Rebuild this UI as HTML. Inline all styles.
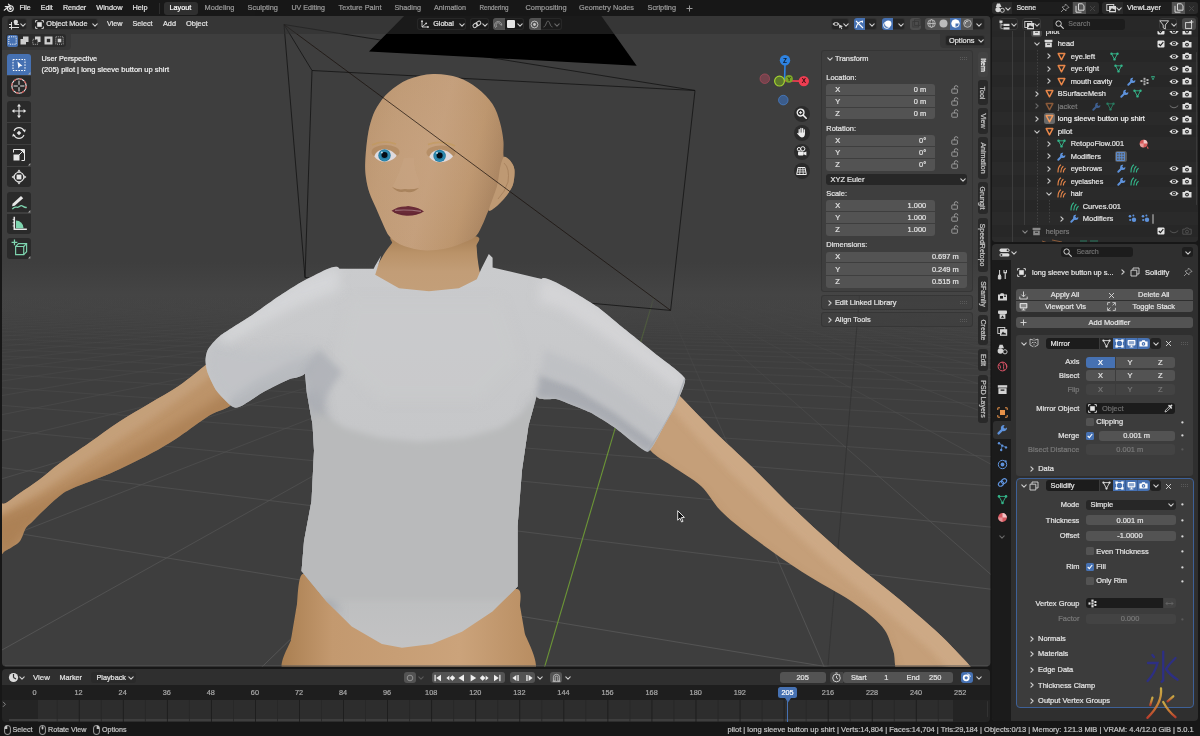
<!DOCTYPE html>
<html><head><meta charset="utf-8"><title>Blender</title>
<style>
html,body{margin:0;padding:0;background:#181818;overflow:hidden}
#root{opacity:0.9999;will-change:transform;position:relative;width:1200px;height:736px;overflow:hidden;background:#181818;font-family:"Liberation Sans",sans-serif;}
.t{position:absolute;white-space:pre;line-height:12px;height:12px;-webkit-text-stroke:0.22px currentColor;}
.r{position:absolute;box-sizing:border-box;}
svg{overflow:visible}
</style></head><body><div id="root">
<svg class="r" style="left:0.00px;top:0.00px;" width="1200" height="736" viewBox="0 0 1200 736"><defs>
<clipPath id="vpclip"><rect x="2" y="16" width="988.4" height="650.4" rx="4" ry="4"/></clipPath>
<linearGradient id="skinHead" x1="0" y1="0" x2="1" y2="0.3">
 <stop offset="0" stop-color="#b8926c"/><stop offset="0.25" stop-color="#c09b76"/><stop offset="0.55" stop-color="#c5a07d"/><stop offset="0.8" stop-color="#bd966e"/><stop offset="1" stop-color="#a88360"/></linearGradient>
<radialGradient id="faceLight" cx="0.38" cy="0.45" r="0.6"><stop offset="0" stop-color="#c9a583" stop-opacity="0.5"/><stop offset="1" stop-color="#c9a583" stop-opacity="0"/></radialGradient>
<linearGradient id="skinNeck" x1="0" y1="0" x2="0" y2="1">
 <stop offset="0" stop-color="#a88056"/><stop offset="0.3" stop-color="#bb946a"/><stop offset="0.6" stop-color="#c39e78"/><stop offset="1" stop-color="#c4a07a"/></linearGradient>
<linearGradient id="skinArmL" x1="0.2" y1="0" x2="0.55" y2="1">
 <stop offset="0" stop-color="#e4ad7b"/><stop offset="0.5" stop-color="#dba26c"/><stop offset="1" stop-color="#c78b54"/></linearGradient>
<linearGradient id="skinArmR" x1="0.6" y1="0" x2="0.25" y2="1">
 <stop offset="0" stop-color="#e9ba8b"/><stop offset="0.5" stop-color="#e2af7d"/><stop offset="1" stop-color="#d29c69"/></linearGradient>
<linearGradient id="skinHip" x1="0" y1="0" x2="1" y2="0">
 <stop offset="0" stop-color="#ab8052"/><stop offset="0.2" stop-color="#c49a70"/><stop offset="0.7" stop-color="#cca47c"/><stop offset="1" stop-color="#b98e62"/></linearGradient>
<linearGradient id="shirtBody" x1="0" y1="0" x2="1" y2="0">
 <stop offset="0" stop-color="#cfd2d8"/><stop offset="0.1" stop-color="#dcdee3"/><stop offset="0.45" stop-color="#e6e7ea"/><stop offset="0.85" stop-color="#e3e4e8"/><stop offset="1" stop-color="#d8dade"/></linearGradient>
<linearGradient id="shirtSlL" x1="0.3" y1="0" x2="0.6" y2="1">
 <stop offset="0" stop-color="#ebecef"/><stop offset="0.55" stop-color="#dfe1e5"/><stop offset="1" stop-color="#cdd0d6"/></linearGradient>
<linearGradient id="shirtSlR" x1="0.7" y1="0" x2="0.35" y2="1">
 <stop offset="0" stop-color="#f1f2f4"/><stop offset="0.45" stop-color="#e8e9ec"/><stop offset="0.8" stop-color="#d6d9df"/><stop offset="1" stop-color="#c6cad2"/></linearGradient>
<linearGradient id="gfade" gradientUnits="userSpaceOnUse" x1="0" y1="292" x2="0" y2="450"><stop offset="0" stop-color="#6c9636" stop-opacity="0"/><stop offset="0.15" stop-color="#6c9636" stop-opacity="0.25"/><stop offset="0.5" stop-color="#6c9636" stop-opacity="0.45"/><stop offset="1" stop-color="#6c9636" stop-opacity="1"/></linearGradient>
<linearGradient id="gridfade" gradientUnits="userSpaceOnUse" x1="0" y1="296" x2="0" y2="670"><stop offset="0" stop-color="#4c4c4c" stop-opacity="0"/><stop offset="0.15" stop-color="#4c4c4c" stop-opacity="0.45"/><stop offset="0.5" stop-color="#525252" stop-opacity="0.9"/><stop offset="1" stop-color="#5a5a5a" stop-opacity="1"/></linearGradient>
<filter id="b3" x="-20%" y="-20%" width="140%" height="140%"><feGaussianBlur stdDeviation="3"/></filter><filter id="b6" x="-20%" y="-20%" width="140%" height="140%"><feGaussianBlur stdDeviation="6"/></filter>
</defs><g clip-path="url(#vpclip)"><rect x="0" y="0" width="1000" height="700" fill="#3f3f3f"/><g stroke="url(#gridfade)" stroke-width="0.85" fill="none"><line x1="0" y1="530.4" x2="995" y2="694.5"/><line x1="0" y1="467.4" x2="995" y2="589.7"/><line x1="0" y1="430.0" x2="995" y2="527.5"/><line x1="0" y1="405.2" x2="995" y2="486.2"/><line x1="0" y1="387.5" x2="995" y2="456.9"/><line x1="0" y1="374.3" x2="995" y2="434.9"/><line x1="0" y1="364.1" x2="995" y2="417.9"/><line x1="0" y1="355.9" x2="995" y2="404.3"/><line x1="0" y1="349.3" x2="995" y2="393.2"/><line x1="0" y1="343.7" x2="995" y2="384.0"/><line x1="0" y1="339.0" x2="995" y2="376.2"/><line x1="0" y1="335.0" x2="995" y2="369.5"/><line x1="0" y1="331.5" x2="995" y2="363.7"/><line x1="0" y1="328.5" x2="995" y2="358.6"/><line x1="0" y1="325.8" x2="995" y2="354.1"/><line x1="0" y1="323.4" x2="995" y2="350.2"/><line x1="0" y1="321.3" x2="995" y2="346.6"/><line x1="0" y1="319.3" x2="995" y2="343.4"/><line x1="0" y1="317.6" x2="995" y2="340.5"/><line x1="0" y1="316.0" x2="995" y2="337.9"/><line x1="0" y1="314.6" x2="995" y2="335.5"/><line x1="0" y1="313.3" x2="995" y2="333.3"/><line x1="0" y1="312.0" x2="995" y2="331.3"/><line x1="0" y1="310.9" x2="995" y2="329.4"/><line x1="0" y1="309.9" x2="995" y2="327.7"/><line x1="0" y1="308.9" x2="995" y2="326.1"/><line x1="0" y1="308.0" x2="995" y2="324.6"/><line x1="0" y1="307.2" x2="995" y2="323.2"/><line x1="0" y1="306.4" x2="995" y2="321.9"/><line x1="0" y1="305.7" x2="995" y2="320.7"/><line x1="0" y1="305.0" x2="995" y2="319.6"/><line x1="0" y1="304.3" x2="995" y2="318.5"/><line x1="0" y1="303.7" x2="995" y2="317.5"/><line x1="0" y1="303.2" x2="995" y2="316.5"/><line x1="0" y1="302.6" x2="995" y2="315.6"/><line x1="0" y1="302.1" x2="995" y2="314.8"/><line x1="0" y1="301.6" x2="995" y2="313.9"/><line x1="0" y1="301.1" x2="995" y2="313.2"/><line x1="0" y1="300.7" x2="995" y2="312.4"/><line x1="0" y1="300.3" x2="995" y2="311.7"/><line x1="0" y1="299.9" x2="995" y2="311.1"/><line x1="0" y1="299.5" x2="995" y2="310.4"/><line x1="0" y1="299.1" x2="995" y2="309.8"/><line x1="0" y1="298.8" x2="995" y2="309.2"/><line x1="0" y1="298.4" x2="995" y2="308.7"/><line x1="0" y1="298.1" x2="995" y2="308.1"/><line x1="0" y1="297.8" x2="995" y2="307.6"/><line x1="0" y1="297.5" x2="995" y2="307.1"/><line x1="0" y1="297.2" x2="995" y2="306.6"/><line x1="0" y1="296.9" x2="995" y2="306.2"/><line x1="0" y1="296.7" x2="995" y2="305.8"/><line x1="0" y1="296.4" x2="995" y2="305.3"/><line x1="0" y1="296.2" x2="995" y2="304.9"/><line x1="0" y1="295.9" x2="995" y2="304.5"/><line x1="0" y1="295.7" x2="995" y2="304.2"/><line x1="0" y1="295.5" x2="995" y2="303.8"/><line x1="0" y1="295.3" x2="995" y2="303.4"/><line x1="0" y1="295.1" x2="995" y2="303.1"/><line x1="0" y1="294.9" x2="995" y2="302.8"/><line x1="0" y1="294.7" x2="995" y2="302.4"/><line x1="0" y1="294.5" x2="995" y2="302.1"/><line x1="0" y1="294.3" x2="995" y2="301.8"/><line x1="623.4" y1="283.5" x2="-9734.1" y2="446.4"/><line x1="623.5" y1="283.6" x2="-9688.1" y2="452.7"/><line x1="623.7" y1="283.6" x2="-9640.4" y2="459.3"/><line x1="623.8" y1="283.6" x2="-9590.9" y2="466.1"/><line x1="624.0" y1="283.6" x2="-9539.6" y2="473.2"/><line x1="624.2" y1="283.7" x2="-9486.3" y2="480.6"/><line x1="624.4" y1="283.7" x2="-9430.8" y2="488.2"/><line x1="624.6" y1="283.7" x2="-9373.1" y2="496.2"/><line x1="624.8" y1="283.7" x2="-9313.1" y2="504.5"/><line x1="625.0" y1="283.8" x2="-9250.5" y2="513.1"/><line x1="625.2" y1="283.8" x2="-9185.2" y2="522.1"/><line x1="625.4" y1="283.8" x2="-9117.1" y2="531.5"/><line x1="625.7" y1="283.9" x2="-9045.9" y2="541.4"/><line x1="625.9" y1="283.9" x2="-8971.4" y2="551.6"/><line x1="626.2" y1="283.9" x2="-8893.5" y2="562.4"/><line x1="626.4" y1="284.0" x2="-8811.7" y2="573.7"/><line x1="626.7" y1="284.0" x2="-8726.0" y2="585.5"/><line x1="627.0" y1="284.0" x2="-8635.9" y2="597.9"/><line x1="627.3" y1="284.1" x2="-8541.2" y2="611.0"/><line x1="627.7" y1="284.1" x2="-8441.4" y2="624.8"/><line x1="628.0" y1="284.2" x2="-8336.1" y2="639.3"/><line x1="628.4" y1="284.2" x2="-8225.0" y2="654.7"/><line x1="628.8" y1="284.3" x2="-8107.4" y2="670.9"/><line x1="629.2" y1="284.4" x2="-7982.7" y2="688.1"/><line x1="629.6" y1="284.4" x2="-7850.5" y2="706.3"/><line x1="630.1" y1="284.5" x2="-7709.8" y2="725.7"/><line x1="630.6" y1="284.5" x2="-7560.0" y2="746.4"/><line x1="631.1" y1="284.6" x2="-7400.0" y2="768.5"/><line x1="631.7" y1="284.7" x2="-7228.8" y2="792.1"/><line x1="632.3" y1="284.8" x2="-7045.2" y2="817.5"/><line x1="633.0" y1="284.9" x2="-6847.8" y2="844.7"/><line x1="633.7" y1="285.0" x2="-6635.0" y2="874.1"/><line x1="634.5" y1="285.1" x2="-6404.8" y2="905.8"/><line x1="635.3" y1="285.2" x2="-6155.0" y2="940.3"/><line x1="636.2" y1="285.3" x2="-5883.2" y2="977.8"/><line x1="637.2" y1="285.5" x2="-5586.1" y2="1018.8"/><line x1="638.3" y1="285.6" x2="-5260.1" y2="1063.8"/><line x1="639.5" y1="285.8" x2="-4900.8" y2="1113.4"/><line x1="640.8" y1="286.0" x2="-4502.8" y2="1168.3"/><line x1="642.3" y1="286.2" x2="-4059.5" y2="1229.5"/><line x1="643.9" y1="286.4" x2="-3562.7" y2="1298.0"/><line x1="645.8" y1="286.6" x2="-3002.1" y2="1375.4"/><line x1="647.9" y1="286.9" x2="-2364.4" y2="1463.4"/><line x1="650.4" y1="287.3" x2="-1632.8" y2="1564.4"/><line x1="653.2" y1="287.7" x2="-784.7" y2="1681.4"/><line x1="660.5" y1="288.7" x2="1393.0" y2="1981.9"/><line x1="665.2" y1="289.3" x2="2823.4" y2="2179.3"/><line x1="671.1" y1="290.1" x2="4587.6" y2="2422.8"/><line x1="678.5" y1="291.2" x2="6818.3" y2="2730.6"/><line x1="688.2" y1="292.5" x2="9728.3" y2="3132.2"/><line x1="701.4" y1="294.3" x2="13684.0" y2="3678.1"/><line x1="720.4" y1="296.9" x2="19372.3" y2="4463.1"/><line x1="750.0" y1="301.0" x2="28250.5" y2="5688.3"/><line x1="802.6" y1="308.3" x2="44048.0" y2="7868.3"/><line x1="922.5" y1="324.8" x2="80017.7" y2="12832.1"/><line x1="1465.9" y1="399.8" x2="243029.1" y2="35327.7"/></g><linearGradient id="haze" gradientUnits="userSpaceOnUse" x1="0" y1="262" x2="0" y2="345"><stop offset="0" stop-color="#4c4c4c" stop-opacity="0"/><stop offset="0.4" stop-color="#4c4c4c" stop-opacity="0.5"/><stop offset="1" stop-color="#4c4c4c" stop-opacity="0"/></linearGradient><rect x="0" y="262" width="1000" height="85" fill="url(#haze)"/><line x1="859.5" y1="296" x2="827.6" y2="670" stroke="#343434" stroke-width="0.8"/><line x1="654.3" y1="296" x2="543.7" y2="670" stroke="url(#gfade)" stroke-width="1.1"/><g stroke="#141414" stroke-width="0.8" fill="none"><line x1="284" y1="24.5" x2="312" y2="70.5"/><line x1="284" y1="24.5" x2="695" y2="90.5"/><line x1="284" y1="24.5" x2="305" y2="277.5"/><polygon points="312.0,70.5 695.0,90.5 670.6,310.4 305.0,277.5"/></g><polygon points="369.0,51.4 636.7,65.7 590.0,0.0 420.0,0.0" fill="#000"/><path d="M303.0 574.0C308.1 573.8 389.3 599.2 400.0 600.0C410.7 600.8 511.0 588.7 517.0 589.0C523.0 589.3 519.6 603.8 520.0 606.0C520.4 608.2 524.4 630.7 525.0 634.0C525.6 637.3 544.0 670.1 532.0 672.0C520.0 673.9 298.1 673.6 286.0 672.0C273.9 670.4 290.4 643.4 291.0 640.0C291.6 636.6 296.4 607.3 297.0 604.0C297.6 600.7 297.9 574.2 303.0 574.0Z" fill="url(#skinHip)"/><clipPath id="armLclip"><path d="M214.0 358.0C208.4 355.4 212.1 360.0 206.3 364.6C200.5 369.2 188.9 379.1 179.4 385.6C169.9 392.1 159.5 397.5 149.5 403.5C139.5 409.5 129.6 414.9 119.6 421.4C109.6 427.9 99.7 435.4 89.7 442.4C79.7 449.4 68.3 457.0 59.8 463.3C51.3 469.6 45.5 475.1 38.9 480.0C32.3 484.9 25.5 489.2 20.0 493.0C14.5 496.8 10.0 500.5 6.0 503.0C2.0 505.5 -2.3 499.2 -4.0 508.0C-5.7 516.8 -5.5 548.8 -4.0 556.0C-2.5 563.2 2.3 552.5 5.0 551.0C7.7 549.5 9.5 548.7 12.0 547.0C14.5 545.3 17.7 544.1 20.0 541.0C22.3 537.9 23.7 531.5 25.7 528.3C27.7 525.1 28.9 525.0 32.0 522.0C35.0 519.0 39.2 514.5 44.0 510.0C48.8 505.6 55.6 499.0 60.5 495.3C65.4 491.6 65.0 491.6 73.3 488.0C81.5 484.4 97.3 479.1 110.0 473.5C122.7 467.9 137.9 460.5 149.5 454.3C161.1 448.1 169.4 442.9 179.4 436.4C189.4 429.9 200.5 420.9 209.3 415.5C218.1 410.1 226.9 409.9 232.0 404.0C237.1 398.1 243.0 387.7 240.0 380.0C237.0 372.3 219.6 360.6 214.0 358.0Z"/></clipPath><g clip-path="url(#armLclip)"><rect x="-10" y="340" width="270" height="230" fill="#be956b"/><polygon points="250.0,395.0 232.0,410.0 209.3,422.0 179.4,443.0 149.5,461.0 119.6,476.0 104.6,487.0 60.0,506.0 30.0,530.0 0.0,566.0 -10.0,520.0 40.0,500.0 100.0,468.0 150.0,440.0 200.0,410.0 240.0,385.0" fill="#a3764a" opacity="0.6" filter="url(#b6)"/><polygon points="214.0,352.0 206.3,358.0 179.4,379.0 149.5,397.0 119.6,415.0 89.7,436.0 59.8,457.0 20.0,487.0 -10.0,505.0 -10.0,520.0 40.0,492.0 100.0,452.0 150.0,420.0 200.0,385.0 225.0,365.0" fill="#c6a27d" opacity="0.9" filter="url(#b3)"/></g><clipPath id="armRclip"><path d="M668.0 384.0C674.7 378.4 672.2 388.3 680.0 396.3C687.8 404.3 703.2 420.4 715.0 432.0C726.8 443.6 736.6 452.0 751.0 466.0C765.4 480.0 784.7 500.2 801.5 516.0C818.3 531.8 835.0 546.8 851.8 561.0C868.5 575.2 885.3 587.2 902.0 601.5C918.7 615.8 939.8 633.3 952.0 646.7C964.2 660.1 982.8 676.1 975.0 682.0C967.2 687.9 918.7 687.3 905.0 682.0C891.3 676.7 896.8 659.2 893.0 650.0C889.2 640.8 888.9 634.7 882.0 626.6C875.1 618.5 865.2 610.7 851.8 601.5C838.4 592.3 818.3 582.3 801.5 571.4C784.7 560.5 764.4 546.1 751.0 536.0C737.6 525.9 729.3 519.3 721.0 511.0C712.7 502.7 709.2 493.5 701.0 486.0C692.8 478.5 680.4 471.9 672.0 466.0C663.6 460.1 656.1 456.8 650.8 450.8C645.5 444.8 637.1 441.1 640.0 430.0C642.9 418.9 661.3 389.6 668.0 384.0Z"/></clipPath><g clip-path="url(#armRclip)"><rect x="630" y="370" width="370" height="320" fill="#c6a07a"/><polygon points="640.0,440.0 650.8,458.0 672.0,474.0 701.0,494.0 721.0,519.0 751.0,544.0 801.5,579.0 851.8,609.0 882.0,634.0 900.0,690.0 860.0,690.0 840.0,620.0 790.0,585.0 740.0,550.0 700.0,515.0 660.0,480.0 635.0,455.0" fill="#ad855c" opacity="0.9" filter="url(#b6)"/><polygon points="668.0,376.0 680.0,388.0 715.0,424.0 751.0,458.0 801.5,508.0 851.8,553.0 902.0,593.0 952.0,638.0 985.0,682.0 960.0,682.0 930.0,650.0 880.0,606.0 830.0,565.0 780.0,520.0 730.0,472.0 690.0,430.0 662.0,398.0" fill="#cfab88" opacity="0.9" filter="url(#b3)"/></g><path d="M396.0 236.0C385.1 236.9 393.3 241.0 392.0 243.0C390.7 245.0 387.6 248.6 386.0 251.0C384.4 253.4 381.5 258.2 380.0 261.0C378.5 263.8 375.7 268.9 375.0 272.0C374.3 275.1 371.8 281.2 375.0 284.0C378.2 286.8 391.8 291.4 399.0 293.0C406.2 294.6 421.0 296.0 429.0 296.0C437.0 296.0 452.5 294.6 459.0 293.0C465.5 291.4 474.5 285.9 478.0 284.0C481.5 282.1 484.7 280.5 485.0 279.0C485.3 277.5 481.0 275.3 480.0 272.5C479.0 269.7 478.0 261.5 477.5 258.0C477.0 254.5 477.0 248.9 476.5 246.0C476.0 243.1 484.7 237.3 474.0 236.0C463.3 234.7 406.9 235.1 396.0 236.0Z" fill="url(#skinNeck)"/><clipPath id="shirtclip"><polygon points="381.2,255.4 375.0,266.0 373.7,268.8 339.4,268.8 309.5,277.8 279.6,295.7 260.0,372.0 305.0,373.4 306.5,391.3 312.5,424.2 314.0,450.7 311.5,501.0 304.0,541.0 301.5,571.0 326.6,601.5 351.7,626.6 381.9,644.0 402.0,647.7 432.0,644.0 462.0,631.7 492.5,611.5 517.6,586.4 517.6,526.0 522.0,470.0 528.5,425.6 536.6,396.3 600.0,400.0 623.0,327.8 597.0,306.6 567.6,288.7 541.5,279.0 492.6,267.5 492.6,257.7 488.8,254.0 481.3,268.8 476.8,279.3 458.9,288.3 429.0,291.2 399.0,288.3 375.2,274.8"/><path d="M339.4 268.8C337.0 261.5 316.5 274.7 309.5 277.8C302.5 280.9 286.6 291.2 279.6 295.7C272.6 300.2 256.8 311.9 249.8 316.6C242.8 321.3 224.8 332.2 219.9 336.0C215.0 339.8 209.6 346.6 207.9 349.5C206.2 352.4 205.5 358.2 205.5 361.0C205.5 363.8 206.6 369.9 207.9 373.4C209.2 376.9 214.1 387.5 216.9 391.3C219.7 395.1 229.0 404.6 231.8 406.3C234.6 408.1 237.0 408.1 240.8 406.3C244.6 404.6 259.1 394.4 264.7 391.3C270.3 388.2 283.9 381.5 288.6 379.4C293.3 377.3 300.2 378.0 305.0 373.4C309.8 368.8 326.0 352.2 330.0 340.0C334.0 327.8 341.8 276.1 339.4 268.8Z"/><path d="M541.5 279.0C543.8 274.7 563.0 286.4 567.6 288.7C572.2 291.0 592.4 303.3 597.0 306.6C601.6 309.9 618.1 323.9 623.0 327.8C627.9 331.7 650.4 349.7 655.6 353.9C660.8 358.1 683.4 374.1 685.0 378.4C686.6 382.7 677.1 401.8 675.2 406.0C673.3 410.2 664.5 425.1 662.2 428.9C659.9 432.7 651.3 451.7 647.5 451.7C643.7 451.7 621.3 432.2 616.5 428.9C611.7 425.6 595.3 415.1 590.4 412.6C585.5 410.2 562.3 400.9 557.8 399.5C553.3 398.1 538.1 401.3 536.6 396.3C535.1 391.3 539.6 349.8 540.0 340.0C540.4 330.2 539.2 283.3 541.5 279.0Z"/></clipPath><g clip-path="url(#shirtclip)"><linearGradient id="shirtV" gradientUnits="userSpaceOnUse" x1="0" y1="260" x2="0" y2="650"><stop offset="0" stop-color="#cbccce"/><stop offset="0.45" stop-color="#c7c8ca"/><stop offset="0.6" stop-color="#bebfc0"/><stop offset="0.85" stop-color="#bebfc0"/><stop offset="1" stop-color="#c4c4c5"/></linearGradient><rect x="190" y="240" width="520" height="420" fill="url(#shirtV)"/><polygon points="300.0,392.0 322.0,392.0 332.0,450.0 330.0,520.0 326.0,580.0 340.0,615.0 320.0,615.0 296.0,575.0 300.0,500.0 306.0,450.0" fill="#a6a9af" opacity="0.9" filter="url(#b6)"/><polygon points="530.0,400.0 540.0,400.0 530.0,470.0 524.0,590.0 512.0,600.0 512.0,520.0 516.0,450.0" fill="#b0b2b6" opacity="0.8" filter="url(#b6)"/><polygon points="296.0,392.0 318.0,412.0 345.0,428.0 380.0,438.0 420.0,442.0 465.0,438.0 500.0,428.0 522.0,414.0 545.0,392.0 545.0,600.0 420.0,600.0 290.0,600.0" fill="#babbbc" opacity="1.0" filter="url(#b3)"/><polygon points="350.0,300.0 500.0,300.0 520.0,360.0 480.0,400.0 380.0,400.0 335.0,360.0" fill="#cbcccd" opacity="0.6" filter="url(#b6)"/><polygon points="228.0,408.0 244.0,408.0 266.0,393.0 290.0,381.0 308.0,375.0 320.0,352.0 290.0,362.0 255.0,380.0 232.0,396.0" fill="#adb0b6" opacity="0.95" filter="url(#b3)"/><polygon points="204.0,350.0 215.0,340.0 250.0,350.0 300.0,345.0 325.0,350.0 310.0,375.0 260.0,392.0 235.0,408.0 215.0,392.0 205.0,372.0" fill="#c0c2c6" opacity="0.7" filter="url(#b6)"/><polygon points="339.0,266.0 309.0,275.0 279.0,293.0 249.0,314.0 219.0,334.0 225.0,345.0 260.0,325.0 300.0,305.0 340.0,290.0" fill="#d7d8da" opacity="0.9" filter="url(#b6)"/><polygon points="303.0,372.0 320.0,350.0 342.0,372.0 326.0,396.0 312.0,422.0" fill="#aeb1b7" opacity="0.8" filter="url(#b3)"/><polygon points="536.0,397.0 540.0,374.0 575.0,386.0 615.0,411.0 658.0,443.0 647.5,453.0 616.5,430.0 590.4,414.0 557.8,401.0" fill="#a9acb2" opacity="0.95" filter="url(#b3)"/><polygon points="540.0,374.0 545.0,350.0 590.0,368.0 630.0,395.0 668.0,425.0 658.0,443.0 615.0,411.0 575.0,386.0" fill="#bfc1c5" opacity="0.85" filter="url(#b3)"/><polygon points="541.5,277.0 567.6,286.7 597.0,304.6 623.0,325.8 655.6,351.9 687.0,377.0 680.0,392.0 640.0,362.0 600.0,333.0 560.0,308.0 538.0,302.0" fill="#d6d6d8" opacity="0.95" filter="url(#b6)"/><path d="M685 378.4 L675.2 406 L662.2 428.9 L647.5 451.7" stroke="#a9acb3" stroke-width="1.6" fill="none" opacity="0.8"/></g><path d="M433.0 74.0C424.7 74.3 415.3 76.5 408.0 79.5C400.7 82.5 394.2 87.4 389.0 92.0C383.8 96.6 380.1 101.9 377.0 107.0C373.9 112.1 372.3 116.8 370.6 122.5C368.9 128.2 367.9 134.2 367.0 141.0C366.1 147.8 365.4 156.8 365.2 163.0C365.0 169.2 365.3 173.0 366.0 178.0C366.7 183.0 367.8 188.0 369.5 193.0C371.2 198.0 373.8 203.0 376.0 208.0C378.2 213.0 380.2 218.2 382.5 223.0C384.8 227.8 386.4 233.2 390.0 237.0C393.6 240.8 398.0 243.8 404.0 246.0C410.0 248.2 418.7 250.2 426.0 250.5C433.3 250.8 441.5 249.4 448.0 248.0C454.5 246.6 460.3 244.0 465.0 242.0C469.7 240.0 472.9 239.2 476.0 236.0C479.1 232.8 481.3 226.8 483.5 222.5C485.7 218.2 487.0 212.6 489.0 210.0C491.0 207.4 492.9 209.1 495.6 207.0C498.3 204.9 502.1 201.2 505.0 197.5C507.9 193.8 511.2 189.7 512.8 185.0C514.4 180.3 514.9 173.5 514.4 169.4C513.9 165.3 511.8 162.6 510.0 160.5C508.2 158.4 504.9 160.2 503.8 157.0C502.7 153.8 504.0 146.8 503.4 141.0C502.8 135.2 501.8 128.7 500.0 122.5C498.2 116.3 496.3 109.8 492.5 104.0C488.7 98.2 482.8 92.4 477.0 88.0C471.2 83.6 465.3 79.8 458.0 77.5C450.7 75.2 441.3 73.7 433.0 74.0Z" fill="url(#skinHead)"/><path d="M433.0 74.0C424.7 74.3 415.3 76.5 408.0 79.5C400.7 82.5 394.2 87.4 389.0 92.0C383.8 96.6 380.1 101.9 377.0 107.0C373.9 112.1 372.3 116.8 370.6 122.5C368.9 128.2 367.9 134.2 367.0 141.0C366.1 147.8 365.4 156.8 365.2 163.0C365.0 169.2 365.3 173.0 366.0 178.0C366.7 183.0 367.8 188.0 369.5 193.0C371.2 198.0 373.8 203.0 376.0 208.0C378.2 213.0 380.2 218.2 382.5 223.0C384.8 227.8 386.4 233.2 390.0 237.0C393.6 240.8 398.0 243.8 404.0 246.0C410.0 248.2 418.7 250.2 426.0 250.5C433.3 250.8 441.5 249.4 448.0 248.0C454.5 246.6 460.3 244.0 465.0 242.0C469.7 240.0 472.9 239.2 476.0 236.0C479.1 232.8 481.3 226.8 483.5 222.5C485.7 218.2 487.0 212.6 489.0 210.0C491.0 207.4 492.9 209.1 495.6 207.0C498.3 204.9 502.1 201.2 505.0 197.5C507.9 193.8 511.2 189.7 512.8 185.0C514.4 180.3 514.9 173.5 514.4 169.4C513.9 165.3 511.8 162.6 510.0 160.5C508.2 158.4 504.9 160.2 503.8 157.0C502.7 153.8 504.0 146.8 503.4 141.0C502.8 135.2 501.8 128.7 500.0 122.5C498.2 116.3 496.3 109.8 492.5 104.0C488.7 98.2 482.8 92.4 477.0 88.0C471.2 83.6 465.3 79.8 458.0 77.5C450.7 75.2 441.3 73.7 433.0 74.0Z" fill="url(#faceLight)"/><path d="M503.8 157.0C505.1 156.0 508.6 158.8 510.0 160.5C511.4 162.2 514.0 166.1 514.4 169.4C514.8 172.7 514.1 181.3 512.8 185.0C511.5 188.7 507.3 194.6 505.0 197.5C502.7 200.4 497.7 205.3 495.6 207.0C493.5 208.7 488.8 212.8 489.0 210.0C489.2 207.2 495.5 191.6 497.0 186.0C498.5 180.4 499.1 171.9 500.0 168.0C500.9 164.1 502.5 158.0 503.8 157.0Z" fill="#bf9a74"/><path d="M504 163 Q510 168 508 182 Q505 192 498 199" stroke="#a27c58" stroke-width="1" fill="none" opacity="0.7"/><ellipse cx="385.5" cy="152" rx="14" ry="7" fill="#a37a4e" opacity="0.45"/><ellipse cx="441" cy="152.5" rx="14.5" ry="7" fill="#a37a4e" opacity="0.45"/><path d="M374.3 156.4 C377.3 147.4 389.7 146.4 396.7 155.8 C391.7 163.0 379.3 164.0 374.3 156.4Z" fill="#e0dbde"/><circle cx="384.5" cy="155.4" r="6.2" fill="#267da3"/><circle cx="384.5" cy="155.4" r="4.6" fill="none" stroke="#3a98bd" stroke-width="1.3" opacity="0.7"/><circle cx="384.5" cy="155.1" r="3.0" fill="#050c16"/><circle cx="381.9" cy="152.4" r="1" fill="#e8f4fa" opacity="0.8"/><path d="M429.3 156.9 C432.3 147.9 446.1 146.9 453.1 156.3 C448.1 163.5 434.3 164.5 429.3 156.9Z" fill="#e0dbde"/><circle cx="439.6" cy="155.9" r="6.2" fill="#267da3"/><circle cx="439.6" cy="155.9" r="4.6" fill="none" stroke="#3a98bd" stroke-width="1.3" opacity="0.7"/><circle cx="439.6" cy="155.6" r="3.0" fill="#050c16"/><circle cx="437.0" cy="152.9" r="1" fill="#e8f4fa" opacity="0.8"/><path d="M372 145 Q383 139.5 396 144" stroke="#c39a52" stroke-width="1.6" fill="none" opacity="0.5"/><path d="M428 144.5 Q441 139.5 455 146" stroke="#c39a52" stroke-width="1.6" fill="none" opacity="0.5"/><path d="M404 158 Q400 172 393 186 Q397 192 404 191 Q410 193 416 189 Q421 186 419 180 Q414 170 414 158Z" fill="#cba886" opacity="0.4"/><path d="M392 187 Q398 193.5 405 191.5 Q412 194 419 188 Q412 190 405 189 Q398 190.5 392 187Z" fill="#9e7750" opacity="0.7"/><path d="M391.5 210.8 Q398 206.2 405.5 206.4 Q408 205.6 411 206.4 Q419 207.4 424 211.6 Q416 216.2 406.5 215.8 Q397.5 215.4 391.5 210.8Z" fill="#6b2c38"/><path d="M395 210.4 Q407 209.2 421 211.4" stroke="#b48d92" stroke-width="1.1" fill="none" opacity="0.7"/><path d="M394 212.2 Q407 216 421.5 212.6" stroke="#5a222e" stroke-width="0.8" fill="none" opacity="0.7"/><line x1="284" y1="24.5" x2="670.6" y2="310.4" stroke="#1a120c" stroke-width="0.8" opacity="0.9"/><rect x="5" y="665.5" width="983" height="0.9" fill="#585858"/></g></svg>
<svg class="r" style="left:3.00px;top:2.00px;" width="12" height="12" viewBox="0 0 12 12"><g fill="none" stroke="#e6e6e6" stroke-width="1.1" stroke-linecap="round"><circle cx="7.4" cy="6.6" r="2.9"/><circle cx="7.4" cy="6.6" r="0.9" fill="#e6e6e6"/><path d="M1.2 8.2 L5.2 5 M2.2 4.6 L6.6 4.6 M5.4 2.2 L7.6 4"/></g></svg>
<div class="t" style="left:19.50px;top:2.39px;font-size:6.98px;color:#e3e3e3;">File</div>
<div class="t" style="left:40.75px;top:2.39px;font-size:6.96px;color:#e3e3e3;">Edit</div>
<div class="t" style="left:63.00px;top:2.39px;font-size:7.09px;color:#e3e3e3;">Render</div>
<div class="t" style="left:96.25px;top:2.38px;font-size:7.38px;color:#e3e3e3;">Window</div>
<div class="t" style="left:132.50px;top:2.38px;font-size:7.29px;color:#e3e3e3;">Help</div>
<div class="r" style="left:158.50px;top:3.00px;width:0.80px;height:11.00px;background:#2e2e2e;border-radius:0px;"></div>
<div class="r" style="left:163.75px;top:2.00px;width:33.75px;height:12.60px;background:#303030;border-radius:3px;"></div>
<div class="t" style="left:169.50px;top:2.38px;font-size:7.24px;color:#ffffff;">Layout</div>
<div class="t" style="left:204.50px;top:2.38px;font-size:7.39px;color:#9a9a9a;">Modeling</div>
<div class="t" style="left:247.50px;top:2.38px;font-size:7.41px;color:#9a9a9a;">Sculpting</div>
<div class="t" style="left:291.50px;top:2.39px;font-size:7.09px;color:#9a9a9a;">UV Editing</div>
<div class="t" style="left:338.50px;top:2.38px;font-size:7.37px;color:#9a9a9a;">Texture Paint</div>
<div class="t" style="left:394.50px;top:2.38px;font-size:7.22px;color:#9a9a9a;">Shading</div>
<div class="t" style="left:434.00px;top:2.38px;font-size:7.20px;color:#9a9a9a;">Animation</div>
<div class="t" style="left:479.50px;top:2.41px;font-size:6.29px;color:#9a9a9a;">Rendering</div>
<div class="t" style="left:525.50px;top:2.38px;font-size:7.38px;color:#9a9a9a;">Compositing</div>
<div class="t" style="left:579.00px;top:2.38px;font-size:7.28px;color:#9a9a9a;">Geometry Nodes</div>
<div class="t" style="left:647.50px;top:2.38px;font-size:7.33px;color:#9a9a9a;">Scripting</div>
<svg class="r" style="left:686.00px;top:4.50px;" width="7" height="7" viewBox="0 0 7 7"><path d="M3.5 0.5V6.5M0.5 3.5H6.5" stroke="#9a9a9a" stroke-width="1"/></svg>
<div class="r" style="left:992.00px;top:2.00px;width:107.00px;height:12.00px;background:#2b2b2b;border-radius:3px;"></div>
<svg class="r" style="left:995.00px;top:3.00px;" width="12" height="10" viewBox="0 0 12 10"><g fill="#d8d8d8"><path d="M2 0.5 L5 0.5 L6.5 4 L0.8 4 Z"/><circle cx="3" cy="6.6" r="2.6"/><circle cx="7.3" cy="7.3" r="2" fill="none" stroke="#d8d8d8" stroke-width="0.9"/></g></svg>
<svg class="r" style="left:1003.50px;top:4.50px;" width="8" height="8" viewBox="0 0 8 8"><path d="M1.7999999999999998 2.9 L4 5.1 L6.2 2.9" stroke="#d0d0d0" stroke-width="1.1" fill="none" stroke-linecap="round" stroke-linejoin="round"/></svg>
<div class="r" style="left:1012.00px;top:2.00px;width:60.00px;height:12.00px;background:#1f1f1f;border-radius:0px;"></div>
<div class="t" style="left:1016.50px;top:2.39px;font-size:6.88px;color:#e3e3e3;">Scene</div>
<svg class="r" style="left:1060.00px;top:3.00px;" width="10" height="10" viewBox="0 0 10 10"><path d="M5.5 1 L9 4.5 L7.5 5 L6 6.5 L6 8 L2 4 L3.5 4 L5 2.5 Z M3.8 6.2 L1 9" fill="none" stroke="#9a9a9a" stroke-width="0.9" stroke-linejoin="round"/></svg>
<div class="r" style="left:1073.00px;top:2.00px;width:13.00px;height:12.00px;background:#545454;border-radius:0px;"></div>
<svg class="r" style="left:1074.50px;top:3.00px;" width="10" height="10" viewBox="0 0 10 10"><path d="M3.5 0.8 H7.2 L9 2.6 V7.2 H3.5 Z" fill="none" stroke="#e6e6e6" stroke-width="0.9"/><path d="M1 2.8 V9.2 H6.5" fill="none" stroke="#e6e6e6" stroke-width="0.9"/></svg>
<svg class="r" style="left:1089.00px;top:4.50px;" width="7" height="7" viewBox="0 0 7 7"><path d="M1 1L6 6M6 1L1 6" stroke="#4a4a4a" stroke-width="0.9"/></svg>
<div class="r" style="left:1102.00px;top:2.00px;width:96.00px;height:12.00px;background:#2b2b2b;border-radius:3px;"></div>
<svg class="r" style="left:1106.00px;top:3.00px;" width="11" height="10" viewBox="0 0 11 10"><rect x="0.8" y="1.5" width="7" height="6" fill="none" stroke="#d8d8d8" stroke-width="0.9"/><rect x="3" y="3" width="7" height="6.3" fill="#d8d8d8"/><path d="M4 8 L6 5 L7.2 6.6 L8 5.8 L9.3 8Z" fill="#2b2b2b"/></svg>
<svg class="r" style="left:1114.50px;top:4.50px;" width="8" height="8" viewBox="0 0 8 8"><path d="M1.7999999999999998 2.9 L4 5.1 L6.2 2.9" stroke="#d0d0d0" stroke-width="1.1" fill="none" stroke-linecap="round" stroke-linejoin="round"/></svg>
<div class="r" style="left:1123.00px;top:2.00px;width:48.00px;height:12.00px;background:#1f1f1f;border-radius:0px;"></div>
<div class="t" style="left:1127.00px;top:2.38px;font-size:7.31px;color:#e3e3e3;">ViewLayer</div>
<div class="r" style="left:1172.00px;top:2.00px;width:13.00px;height:12.00px;background:#545454;border-radius:0px;"></div>
<svg class="r" style="left:1173.50px;top:3.00px;" width="10" height="10" viewBox="0 0 10 10"><path d="M3.5 0.8 H7.2 L9 2.6 V7.2 H3.5 Z" fill="none" stroke="#e6e6e6" stroke-width="0.9"/><path d="M1 2.8 V9.2 H6.5" fill="none" stroke="#e6e6e6" stroke-width="0.9"/></svg>
<svg class="r" style="left:1188.00px;top:4.50px;" width="7" height="7" viewBox="0 0 7 7"><path d="M1 1L6 6M6 1L1 6" stroke="#4a4a4a" stroke-width="0.9"/></svg>
<div class="r" style="left:2.00px;top:16.00px;width:988.40px;height:17.60px;background:rgba(48,48,48,0.556);border-radius:0px;border-top-left-radius:4px;border-top-right-radius:4px"></div>
<div class="r" style="left:7.30px;top:18.00px;width:19.50px;height:12.00px;background:rgba(28,28,28,0.62);border-radius:3px;border:0.6px solid rgba(255,255,255,0.05)"></div>
<svg class="r" style="left:8.00px;top:18.50px;" width="12" height="11" viewBox="0 0 12 11"><g stroke="#dcdcdc" stroke-width="1" fill="none"><path d="M1 5.5H4M6.5 5.5H11M1 8.5H11M3.5 3V10.5"/><circle cx="7.8" cy="3" r="2.2" fill="#dcdcdc" stroke="none"/></g></svg>
<svg class="r" style="left:19.00px;top:20.50px;" width="8" height="8" viewBox="0 0 8 8"><path d="M1.7999999999999998 2.9 L4 5.1 L6.2 2.9" stroke="#d0d0d0" stroke-width="1.1" fill="none" stroke-linecap="round" stroke-linejoin="round"/></svg>
<div class="r" style="left:31.25px;top:17.50px;width:66.75px;height:12.00px;background:rgba(28,28,28,0.62);border-radius:3px;border:0.6px solid rgba(255,255,255,0.06)"></div>
<svg class="r" style="left:34.50px;top:19.50px;" width="9" height="9" viewBox="0 0 9 9"><rect x="2.2" y="2.2" width="4.6" height="4.6" fill="#e6e6e6"/><path d="M0.6 2.5V0.6H2.5M6.5 0.6H8.4V2.5M8.4 6.5V8.4H6.5M2.5 8.4H0.6V6.5" stroke="#e6e6e6" stroke-width="0.9" fill="none"/></svg>
<div class="t" style="left:46.25px;top:17.98px;font-size:7.28px;color:#e3e3e3;">Object Mode</div>
<svg class="r" style="left:90.50px;top:20.50px;" width="8" height="8" viewBox="0 0 8 8"><path d="M1.7999999999999998 2.9 L4 5.1 L6.2 2.9" stroke="#d0d0d0" stroke-width="1.1" fill="none" stroke-linecap="round" stroke-linejoin="round"/></svg>
<div class="t" style="left:107.00px;top:17.98px;font-size:7.21px;color:#e3e3e3;">View</div>
<div class="t" style="left:132.50px;top:17.98px;font-size:7.20px;color:#e3e3e3;">Select</div>
<div class="t" style="left:163.00px;top:17.98px;font-size:7.31px;color:#e3e3e3;">Add</div>
<div class="t" style="left:186.00px;top:17.98px;font-size:7.44px;color:#e3e3e3;">Object</div>
<div class="r" style="left:417.40px;top:18.00px;width:48.80px;height:12.00px;background:rgba(28,28,28,0.62);border-radius:3px;border:0.6px solid rgba(255,255,255,0.06)"></div>
<svg class="r" style="left:419.50px;top:19.50px;" width="9" height="9" viewBox="0 0 9 9"><path d="M2 1 V7 H8" stroke="#dcdcdc" stroke-width="0.9" fill="none"/><path d="M2 7 L6 3.5" stroke="#dcdcdc" stroke-width="0.9"/><circle cx="2" cy="1.2" r="0.9" fill="#dcdcdc"/><circle cx="8" cy="7" r="0.9" fill="#dcdcdc"/><circle cx="6.2" cy="3.3" r="0.9" fill="#dcdcdc"/></svg>
<div class="t" style="left:433.20px;top:17.98px;font-size:7.20px;color:#e3e3e3;">Global</div>
<svg class="r" style="left:457.80px;top:20.50px;" width="8" height="8" viewBox="0 0 8 8"><path d="M1.7999999999999998 2.9 L4 5.1 L6.2 2.9" stroke="#d0d0d0" stroke-width="1.1" fill="none" stroke-linecap="round" stroke-linejoin="round"/></svg>
<div class="r" style="left:469.90px;top:18.00px;width:19.60px;height:12.00px;background:rgba(28,28,28,0.62);border-radius:3px;border:0.6px solid rgba(255,255,255,0.06)"></div>
<svg class="r" style="left:471.50px;top:19.50px;" width="10" height="9" viewBox="0 0 10 9"><g fill="none" stroke="#dcdcdc" stroke-width="1"><rect x="0.8" y="3.6" width="5" height="3.6" rx="1.8" transform="rotate(-40 3.3 5.4)"/><rect x="4" y="1.6" width="5" height="3.6" rx="1.8" transform="rotate(-40 6.5 3.4)"/></g></svg>
<svg class="r" style="left:481.00px;top:20.50px;" width="8" height="8" viewBox="0 0 8 8"><path d="M1.7999999999999998 2.9 L4 5.1 L6.2 2.9" stroke="#d0d0d0" stroke-width="1.1" fill="none" stroke-linecap="round" stroke-linejoin="round"/></svg>
<div class="r" style="left:492.60px;top:18.00px;width:31.40px;height:12.00px;background:rgba(28,28,28,0.62);border-radius:3px;border:0.6px solid rgba(255,255,255,0.06)"></div>
<div class="r" style="left:492.60px;top:18.00px;width:12.10px;height:12.00px;background:rgba(96,96,96,0.8);border-radius:3px;border-top-right-radius:0;border-bottom-right-radius:0"></div>
<svg class="r" style="left:494.20px;top:19.50px;" width="9" height="9" viewBox="0 0 9 9"><path d="M1.5 7.5 A3.6 3.6 0 1 1 7.8 5.2 L6.2 4.6 A2 2 0 1 0 2.8 6.2 Z" fill="none" stroke="#9a9a9a" stroke-width="1"/></svg>
<div class="r" style="left:506.60px;top:20.00px;width:8.20px;height:8.00px;background:#e6e6e6;border-radius:1px;"></div>
<svg class="r" style="left:516.20px;top:20.50px;" width="8" height="8" viewBox="0 0 8 8"><path d="M1.7999999999999998 2.9 L4 5.1 L6.2 2.9" stroke="#d0d0d0" stroke-width="1.1" fill="none" stroke-linecap="round" stroke-linejoin="round"/></svg>
<div class="r" style="left:528.50px;top:18.00px;width:33.00px;height:12.00px;background:rgba(28,28,28,0.62);border-radius:3px;border:0.6px solid rgba(255,255,255,0.06)"></div>
<div class="r" style="left:528.50px;top:18.00px;width:12.10px;height:12.00px;background:rgba(96,96,96,0.8);border-radius:3px;border-top-right-radius:0;border-bottom-right-radius:0"></div>
<svg class="r" style="left:530.00px;top:19.50px;" width="9" height="9" viewBox="0 0 9 9"><circle cx="4.5" cy="4.5" r="3.4" fill="none" stroke="#c8c8c8" stroke-width="0.9"/><circle cx="4.5" cy="4.5" r="1.4" fill="#c8c8c8"/></svg>
<svg class="r" style="left:543.00px;top:20.00px;" width="10" height="8" viewBox="0 0 10 8"><path d="M0.5 7 C3 7 3.2 1 5 1 C6.8 1 7 7 9.5 7" fill="none" stroke="#6a6a6a" stroke-width="0.9"/></svg>
<svg class="r" style="left:552.80px;top:20.50px;" width="8" height="8" viewBox="0 0 8 8"><path d="M1.7999999999999998 2.9 L4 5.1 L6.2 2.9" stroke="#6a6a6a" stroke-width="1.1" fill="none" stroke-linecap="round" stroke-linejoin="round"/></svg>
<div class="r" style="left:830.70px;top:18.00px;width:18.70px;height:12.00px;background:rgba(28,28,28,0.62);border-radius:3px;border:0.6px solid rgba(255,255,255,0.05)"></div>
<svg class="r" style="left:831.50px;top:19.50px;" width="12" height="9" viewBox="0 0 12 9"><path d="M0.5 4 Q4 0 7.5 4 Q4 8 0.5 4Z" fill="#dcdcdc"/><circle cx="4" cy="4" r="1.5" fill="#3a3a3a"/><path d="M7 4.5 L11 6.3 L9.3 6.9 L10.3 8.8 L9.4 9.2 L8.5 7.3 L7.3 8.4Z" fill="#dcdcdc"/></svg>
<svg class="r" style="left:841.50px;top:20.50px;" width="8" height="8" viewBox="0 0 8 8"><path d="M1.7999999999999998 2.9 L4 5.1 L6.2 2.9" stroke="#d0d0d0" stroke-width="1.1" fill="none" stroke-linecap="round" stroke-linejoin="round"/></svg>
<div class="r" style="left:853.70px;top:18.00px;width:23.30px;height:12.00px;background:rgba(28,28,28,0.62);border-radius:3px;border:0.6px solid rgba(255,255,255,0.05)"></div>
<div class="r" style="left:853.70px;top:18.00px;width:11.70px;height:12.00px;background:#4772b3;border-radius:3px;border-top-right-radius:0;border-bottom-right-radius:0"></div>
<svg class="r" style="left:855.10px;top:19.50px;" width="9" height="9" viewBox="0 0 9 9"><path d="M1 8 C2 3 5 1.5 8 1" stroke="#fff" stroke-width="1.1" fill="none"/><path d="M1 1 L8 8" stroke="#fff" stroke-width="1.1"/><path d="M8 1 L5.8 1.2 L7.8 3.2Z" fill="#fff"/></svg>
<svg class="r" style="left:867.50px;top:20.50px;" width="8" height="8" viewBox="0 0 8 8"><path d="M1.7999999999999998 2.9 L4 5.1 L6.2 2.9" stroke="#d0d0d0" stroke-width="1.1" fill="none" stroke-linecap="round" stroke-linejoin="round"/></svg>
<div class="r" style="left:881.70px;top:18.00px;width:23.50px;height:12.00px;background:rgba(28,28,28,0.62);border-radius:3px;border:0.6px solid rgba(255,255,255,0.05)"></div>
<div class="r" style="left:881.70px;top:18.00px;width:11.80px;height:12.00px;background:#4772b3;border-radius:3px;border-top-right-radius:0;border-bottom-right-radius:0"></div>
<svg class="r" style="left:883.10px;top:19.50px;" width="9" height="9" viewBox="0 0 9 9"><circle cx="5.2" cy="3.8" r="3.2" fill="#fff"/><circle cx="3.8" cy="5.2" r="3.2" fill="none" stroke="#fff" stroke-width="1"/></svg>
<svg class="r" style="left:897.00px;top:20.50px;" width="8" height="8" viewBox="0 0 8 8"><path d="M1.7999999999999998 2.9 L4 5.1 L6.2 2.9" stroke="#d0d0d0" stroke-width="1.1" fill="none" stroke-linecap="round" stroke-linejoin="round"/></svg>
<div class="r" style="left:910.20px;top:18.00px;width:11.00px;height:12.00px;background:rgba(84,84,84,0.8);border-radius:3px;"></div>
<svg class="r" style="left:912.00px;top:19.00px;" width="9" height="9" viewBox="0 0 9 9"><rect x="0.8" y="2.4" width="5.6" height="5.6" fill="none" stroke="#3a3a3a" stroke-width="0.9"/><rect x="2.6" y="0.8" width="5.6" height="5.6" fill="none" stroke="#3a3a3a" stroke-width="0.9"/></svg>
<div class="r" style="left:925.20px;top:18.00px;width:59.40px;height:12.00px;background:rgba(28,28,28,0.62);border-radius:3px;border:0.6px solid rgba(255,255,255,0.05)"></div>
<div class="r" style="left:925.20px;top:18.00px;width:47.60px;height:12.00px;background:rgba(88,88,88,0.9);border-radius:3px;border-top-right-radius:0;border-bottom-right-radius:0"></div>
<svg class="r" style="left:926.50px;top:19.00px;" width="9" height="9" viewBox="0 0 9 9"><g fill="none" stroke="#c8c8c8" stroke-width="0.8"><circle cx="4.5" cy="4.5" r="3.8"/><ellipse cx="4.5" cy="4.5" rx="1.7" ry="3.8"/><path d="M0.7 4.5H8.3"/></g></svg>
<svg class="r" style="left:938.50px;top:19.00px;" width="9" height="9" viewBox="0 0 9 9"><circle cx="4.5" cy="4.5" r="4" fill="#bdbdbd"/></svg>
<div class="r" style="left:949.50px;top:18.00px;width:11.25px;height:12.00px;background:#4772b3;border-radius:0px;"></div>
<svg class="r" style="left:950.60px;top:19.00px;" width="9" height="9" viewBox="0 0 9 9"><circle cx="4.5" cy="4.5" r="3.8" fill="none" stroke="#fff" stroke-width="0.9"/><path d="M4.5 0.7 A3.8 3.8 0 0 0 4.5 8.3 L4.5 4.5 L8.3 4.5 A3.8 3.8 0 0 0 4.5 0.7Z" fill="#fff"/></svg>
<svg class="r" style="left:962.50px;top:19.00px;" width="9" height="9" viewBox="0 0 9 9"><circle cx="4.5" cy="4.5" r="3.8" fill="#6a6a6a" stroke="#bdbdbd" stroke-width="0.9"/><path d="M2.2 5.2 A2.6 2.6 0 0 1 5.2 2.2" stroke="#d8d8d8" stroke-width="0.9" fill="none"/></svg>
<svg class="r" style="left:974.75px;top:20.50px;" width="8" height="8" viewBox="0 0 8 8"><path d="M1.7999999999999998 2.9 L4 5.1 L6.2 2.9" stroke="#d0d0d0" stroke-width="1.1" fill="none" stroke-linecap="round" stroke-linejoin="round"/></svg>
<div class="r" style="left:939.50px;top:33.60px;width:50.90px;height:14.40px;background:rgba(48,48,48,0.45);border-radius:0px;border-bottom-left-radius:4px"></div>
<div class="r" style="left:945.00px;top:35.40px;width:40.00px;height:10.60px;background:rgba(28,28,28,0.62);border-radius:3px;border:0.6px solid rgba(255,255,255,0.06)"></div>
<div class="t" style="left:949.00px;top:34.98px;font-size:7.40px;color:#e3e3e3;">Options</div>
<svg class="r" style="left:977.00px;top:37.00px;" width="8" height="8" viewBox="0 0 8 8"><path d="M1.7999999999999998 2.9 L4 5.1 L6.2 2.9" stroke="#d0d0d0" stroke-width="1.1" fill="none" stroke-linecap="round" stroke-linejoin="round"/></svg>
<div class="r" style="left:2.00px;top:33.60px;width:68.60px;height:16.00px;background:rgba(48,48,48,0.45);border-radius:0px;border-bottom-right-radius:4px"></div>
<div class="r" style="left:6.25px;top:34.40px;width:59.25px;height:13.00px;background:#2c2c2c;border-radius:3px;"></div>
<div class="r" style="left:7.00px;top:35.20px;width:11.20px;height:11.40px;background:#4772b3;border-radius:2px;"></div>
<svg class="r" style="left:8.00px;top:36.30px;" width="9" height="9" viewBox="0 0 9 9"><rect x="0.8" y="0.8" width="7.4" height="7.4" fill="none" stroke="#fff" stroke-width="0.9" stroke-dasharray="1.2 1"/></svg>
<svg class="r" style="left:20.00px;top:36.30px;" width="9" height="9" viewBox="0 0 9 9"><rect x="0.5" y="3" width="5.5" height="5.5" fill="#cfcfcf"/><rect x="3" y="0.5" width="5.5" height="5.5" fill="#cfcfcf"/></svg>
<svg class="r" style="left:31.50px;top:36.30px;" width="9" height="9" viewBox="0 0 9 9"><rect x="3" y="0.5" width="5.5" height="5.5" fill="#cfcfcf"/><rect x="0.8" y="3.3" width="5" height="5" fill="#2c2c2c" stroke="#cfcfcf" stroke-width="0.8" stroke-dasharray="1 1"/></svg>
<svg class="r" style="left:43.50px;top:36.30px;" width="9" height="9" viewBox="0 0 9 9"><rect x="0.5" y="0.5" width="8" height="8" fill="#cfcfcf"/><rect x="2.8" y="2.8" width="3.4" height="3.4" fill="#2c2c2c"/></svg>
<svg class="r" style="left:55.00px;top:36.30px;" width="9" height="9" viewBox="0 0 9 9"><rect x="0.8" y="0.8" width="7.4" height="7.4" fill="none" stroke="#cfcfcf" stroke-width="0.8" stroke-dasharray="1 1"/><rect x="2.7" y="2.7" width="3.6" height="3.6" fill="#cfcfcf"/></svg>
<div class="r" style="left:6.9px;top:54.3px;width:23.8px;height:20.9px;background:#4772b3;border-radius:3px 3px 0 0"></div>
<div class="r" style="left:6.9px;top:76px;width:23.8px;height:20.9px;background:#2b2b2b;border-radius:0 0 3px 3px"></div>
<div class="r" style="left:6.9px;top:101.3px;width:23.8px;height:20.6px;background:#2b2b2b;border-radius:3px 3px 0 0"></div>
<div class="r" style="left:6.9px;top:122.9px;width:23.8px;height:20.9px;background:#2b2b2b;border-radius:0"></div>
<div class="r" style="left:6.9px;top:144.8px;width:23.8px;height:20.8px;background:#2b2b2b;border-radius:0"></div>
<div class="r" style="left:6.9px;top:166.6px;width:23.8px;height:20.8px;background:#2b2b2b;border-radius:0 0 3px 3px"></div>
<div class="r" style="left:6.9px;top:191.8px;width:23.8px;height:20.7px;background:#2b2b2b;border-radius:3px 3px 0 0"></div>
<div class="r" style="left:6.9px;top:213.5px;width:23.8px;height:20.7px;background:#2b2b2b;border-radius:0 0 3px 3px"></div>
<div class="r" style="left:6.9px;top:238.3px;width:23.8px;height:20.7px;background:#2b2b2b;border-radius:3px"></div>
<svg class="r" style="left:10.70px;top:56.70px;" width="16" height="16" viewBox="0 0 16 16"><rect x="2" y="2.5" width="12" height="11" fill="none" stroke="#fff" stroke-width="1" stroke-dasharray="1.6 1.2"/><path d="M6.5 4.5 L11.5 9 L9 9.3 L7.4 11.6Z" fill="#fff"/></svg>
<svg class="r" style="left:9.70px;top:77.20px;" width="18" height="18" viewBox="0 0 18 18"><circle cx="9" cy="9" r="7.2" fill="none" stroke="#e8e8e8" stroke-width="1.1"/><circle cx="9" cy="9" r="7.2" fill="none" stroke="#d9534f" stroke-width="1.1" stroke-dasharray="2.83 2.83"/><path d="M9 3.6V7.8M9 10.2V14.4M3.6 9H7.8M10.2 9H14.4" stroke="#e8e8e8" stroke-width="1"/></svg>
<svg class="r" style="left:10.70px;top:103.30px;" width="16" height="16" viewBox="0 0 16 16"><g stroke="#e8e8e8" stroke-width="1.1" fill="#e8e8e8"><path d="M8 2.5V13.5M2.5 8H13.5" fill="none"/><path d="M8 0.8 L10 3.4 H6Z M8 15.2 L10 12.6 H6Z M0.8 8 L3.4 6 V10Z M15.2 8 L12.6 6 V10Z" stroke="none"/></g></svg>
<svg class="r" style="left:10.70px;top:125.20px;" width="16" height="16" viewBox="0 0 16 16"><g fill="none" stroke="#e8e8e8" stroke-width="1.1"><path d="M3 6 A5.4 5.4 0 0 1 13 6"/><path d="M13 10 A5.4 5.4 0 0 1 3 10"/></g><path d="M13.9 7.6 L11.4 5 L14.8 4.6Z M2.1 8.4 L4.6 11 L1.2 11.4Z" fill="#e8e8e8"/><rect x="6.4" y="6.4" width="3.2" height="3.2" fill="#e8e8e8" transform="rotate(45 8 8)"/></svg>
<svg class="r" style="left:10.70px;top:147.20px;" width="16" height="16" viewBox="0 0 16 16"><rect x="2.5" y="7.5" width="6" height="6" fill="#e8e8e8"/><path d="M2.5 5.5V2.5H13.5V13.5H10.5" fill="none" stroke="#e8e8e8" stroke-width="1"/><path d="M8 8 L12.4 3.6M9.8 3.5H12.5V6.2" stroke="#e8e8e8" stroke-width="1" fill="none"/></svg>
<svg class="r" style="left:10.70px;top:169.20px;" width="16" height="16" viewBox="0 0 16 16"><circle cx="8" cy="8" r="4.8" fill="none" stroke="#e8e8e8" stroke-width="1.1"/><rect x="5.6" y="5.6" width="4.8" height="4.8" fill="#e8e8e8"/><path d="M8 0.6 L9.8 2.8H6.2Z M8 15.4 L9.8 13.2H6.2Z M0.6 8 L2.8 6.2V9.8Z M15.4 8 L13.2 6.2V9.8Z" fill="#e8e8e8"/></svg>
<svg class="r" style="left:10.05px;top:192.75px;" width="18.5" height="18.5" viewBox="0 0 16 16"><path d="M2 14 C5 10 6 14 8.5 11.5 C10.5 9.5 11.5 13 14.5 12.5" fill="none" stroke="#7fd6b0" stroke-width="1.1"/><path d="M2.2 9.2 L9.5 2.6 L11.4 4.6 L4 11 L1.8 11.4Z" fill="#e8e8e8"/></svg>
<svg class="r" style="left:10.55px;top:215.25px;" width="17.5" height="17.5" viewBox="0 0 16 16"><path d="M3 1.5 V13 H14.5" fill="none" stroke="#e8e8e8" stroke-width="1.4"/><path d="M4.5 12 V5 A7 7 0 0 1 11.5 12 Z" fill="#7fd6b0"/><path d="M1.5 4H3M1.5 7H3M1.5 10H3" stroke="#e8e8e8" stroke-width="0.8"/></svg>
<svg class="r" style="left:10.65px;top:239.35px;" width="18.5" height="18.5" viewBox="0 0 16 16"><g fill="none" stroke="#7fd6b0" stroke-width="1"><path d="M4 6.5 H11 V13.5 H4Z"/><path d="M4 6.5 L6.5 4 H13.5 V11 L11 13.5"/><path d="M11 6.5 L13.5 4"/></g><path d="M3 0.5V5.5M0.5 3H5.5" stroke="#7fd6b0" stroke-width="1.1"/></svg>
<svg class="r" style="left:27.80px;top:72.20px;" width="2.4" height="2.4" viewBox="0 0 2.4 2.4"><path d="M2.4 0V2.4H0Z" fill="#a8a8a8"/></svg>
<svg class="r" style="left:27.80px;top:162.60px;" width="2.4" height="2.4" viewBox="0 0 2.4 2.4"><path d="M2.4 0V2.4H0Z" fill="#a8a8a8"/></svg>
<svg class="r" style="left:27.80px;top:209.50px;" width="2.4" height="2.4" viewBox="0 0 2.4 2.4"><path d="M2.4 0V2.4H0Z" fill="#a8a8a8"/></svg>
<svg class="r" style="left:27.80px;top:256.00px;" width="2.4" height="2.4" viewBox="0 0 2.4 2.4"><path d="M2.4 0V2.4H0Z" fill="#a8a8a8"/></svg>
<div class="t" style="left:41.50px;top:52.98px;font-size:7.32px;color:#f0f0f0;">User Perspective</div>
<div class="t" style="left:41.50px;top:63.97px;font-size:7.54px;color:#f0f0f0;">(205) pilot | long sleeve button up shirt</div>
<svg class="r" style="left:755.00px;top:50.00px;" width="60" height="62" viewBox="0 0 60 62"><line x1="29.6" y1="30.6" x2="30" y2="14" stroke="#2f84e3" stroke-width="1.6"/>
<line x1="29.6" y1="30.8" x2="45" y2="31.1" stroke="#f03e52" stroke-width="1.6"/>
<circle cx="9.8" cy="28.7" r="4.8" fill="#a3485a" fill-opacity="0.55" stroke="#d8506a" stroke-opacity="0.6" stroke-width="0.8"/>
<circle cx="28.3" cy="50.1" r="4.8" fill="#3a72c0" fill-opacity="0.6" stroke="#4d8fe8" stroke-opacity="0.7" stroke-width="0.8"/>
<circle cx="34" cy="28.8" r="3.9" fill="#7ca52a"/>
<text x="34" y="30.8" font-family="Liberation Sans" font-size="5.6" font-weight="bold" text-anchor="middle" fill="#27330d">Y</text>
<circle cx="30" cy="10.2" r="5.2" fill="#2f84e3"/>
<circle cx="48.8" cy="31.1" r="5.2" fill="#f03e52"/>
<circle cx="24.5" cy="31.1" r="4.9" fill="#607f2a" fill-opacity="0.9" stroke="#a5d432" stroke-width="1.2"/>
<text x="30" y="12.5" font-family="Liberation Sans" font-size="6.4" font-weight="bold" text-anchor="middle" fill="#0d1a2c">Z</text>
<text x="48.8" y="33.4" font-family="Liberation Sans" font-size="6.4" font-weight="bold" text-anchor="middle" fill="#2c0d12">X</text>
</svg>
<div class="r" style="left:793.9px;top:105.8px;width:16px;height:16px;border-radius:8px;background:rgba(30,30,30,0.55)"></div>
<div class="r" style="left:793.9px;top:124.80000000000001px;width:16px;height:16px;border-radius:8px;background:rgba(30,30,30,0.55)"></div>
<div class="r" style="left:793.9px;top:143.8px;width:16px;height:16px;border-radius:8px;background:rgba(30,30,30,0.55)"></div>
<div class="r" style="left:793.9px;top:162.5px;width:16px;height:16px;border-radius:8px;background:rgba(30,30,30,0.55)"></div>
<svg class="r" style="left:796.20px;top:108.30px;" width="11" height="11" viewBox="0 0 11 11"><circle cx="4.6" cy="4.6" r="3.4" fill="none" stroke="#f0f0f0" stroke-width="1.3"/><path d="M7.2 7.2 L10.2 10.2" stroke="#f0f0f0" stroke-width="1.6" stroke-linecap="round"/><path d="M3 4.6H6.2M4.6 3V6.2" stroke="#f0f0f0" stroke-width="0.9"/></svg>
<svg class="r" style="left:796.40px;top:127.20px;" width="11" height="11" viewBox="0 0 11 11"><g stroke="#f0f0f0" stroke-width="1.25" stroke-linecap="round" fill="none"><path d="M3.2 6 V2.6M4.9 5.4 V1.4M6.6 5.4 V1.6M8.3 6 V2.8"/></g><path d="M2.6 5.6 H8.9 V7.4 Q8.6 10.4 5.8 10.4 Q3.8 10.4 2.9 8.6 L1 6.4 Q1.6 5.4 2.6 6.4Z" fill="#f0f0f0"/></svg>
<svg class="r" style="left:796.40px;top:146.30px;" width="11" height="11" viewBox="0 0 11 11"><rect x="2" y="5.4" width="5.6" height="4" rx="0.8" fill="#f0f0f0"/><path d="M7.6 6.6 L10.4 5.4 V9.4 L7.6 8.2Z" fill="#f0f0f0"/><circle cx="3" cy="3.2" r="1.7" fill="none" stroke="#f0f0f0" stroke-width="1"/><circle cx="6.8" cy="2.8" r="2.1" fill="none" stroke="#f0f0f0" stroke-width="1"/></svg>
<svg class="r" style="left:796.40px;top:165.00px;" width="11" height="11" viewBox="0 0 11 11"><path d="M2 2.5H9L10.3 9.5H0.7Z" fill="none" stroke="#f0f0f0" stroke-width="1"/><path d="M4.2 2.5L3.7 9.5M6.8 2.5L7.3 9.5M1.6 4.8H9.4M1.1 7H9.9" stroke="#f0f0f0" stroke-width="0.8"/></svg>
<svg class="r" style="left:676.50px;top:509.50px;" width="9" height="13" viewBox="0 0 9 13"><path d="M0.7 0.7 V10.2 L2.9 8.1 L4.6 12 L6 11.4 L4.4 7.6 L7.4 7.4Z" fill="#111" stroke="#f2f2f2" stroke-width="0.9" stroke-linejoin="round"/></svg>
<div class="r" style="left:820.80px;top:50.20px;width:152.10px;height:242.20px;background:rgba(64,64,64,0.6);border-radius:3px;border:0.8px solid rgba(54,54,54,0.85)"></div>
<svg class="r" style="left:826.00px;top:54.60px;" width="8" height="8" viewBox="0 0 8 8"><path d="M1.7999999999999998 2.9 L4 5.1 L6.2 2.9" stroke="#d0d0d0" stroke-width="1.1" fill="none" stroke-linecap="round" stroke-linejoin="round"/></svg>
<div class="t" style="left:834.90px;top:52.88px;font-size:7.45px;color:#e3e3e3;">Transform</div>
<svg class="r" style="left:959.50px;top:57.00px;" width="8" height="4" viewBox="0 0 8 4"><rect x="0" y="0" width="1" height="1" fill="#5a5a5a"/><rect x="0" y="2" width="1" height="1" fill="#5a5a5a"/><rect x="2" y="0" width="1" height="1" fill="#5a5a5a"/><rect x="2" y="2" width="1" height="1" fill="#5a5a5a"/><rect x="4" y="0" width="1" height="1" fill="#5a5a5a"/><rect x="4" y="2" width="1" height="1" fill="#5a5a5a"/><rect x="6" y="0" width="1" height="1" fill="#5a5a5a"/><rect x="6" y="2" width="1" height="1" fill="#5a5a5a"/></svg>
<div class="t" style="left:826.30px;top:71.58px;font-size:7.45px;color:#e3e3e3;">Location:</div>
<div class="r" style="left:826.2px;top:83.55px;width:108.5px;height:11.5px;background:#545454;border-radius:3px 3px 0 0"></div>
<div class="t" style="left:835.30px;top:83.88px;font-size:7.45px;color:#e3e3e3;">X</div>
<div class="t" style="left:913.78px;top:83.88px;font-size:7.45px;color:#e3e3e3;">0 m</div>
<svg class="r" style="left:950.70px;top:84.80px;" width="8" height="9" viewBox="0 0 8 9"><rect x="0.8" y="4" width="5.6" height="4.2" rx="0.6" fill="none" stroke="#a8a8a8" stroke-width="0.85"/><path d="M3.4 4 V2.4 A1.7 1.7 0 0 1 6.9 2.4" fill="none" stroke="#a8a8a8" stroke-width="0.85"/></svg>
<div class="r" style="left:826.2px;top:95.55px;width:108.5px;height:11.5px;background:#545454;border-radius:0"></div>
<div class="t" style="left:835.30px;top:95.88px;font-size:7.45px;color:#e3e3e3;">Y</div>
<div class="t" style="left:913.78px;top:95.88px;font-size:7.45px;color:#e3e3e3;">0 m</div>
<svg class="r" style="left:950.70px;top:96.80px;" width="8" height="9" viewBox="0 0 8 9"><rect x="0.8" y="4" width="5.6" height="4.2" rx="0.6" fill="none" stroke="#a8a8a8" stroke-width="0.85"/><path d="M3.4 4 V2.4 A1.7 1.7 0 0 1 6.9 2.4" fill="none" stroke="#a8a8a8" stroke-width="0.85"/></svg>
<div class="r" style="left:826.2px;top:107.85px;width:108.5px;height:11.5px;background:#545454;border-radius:0 0 3px 3px"></div>
<div class="t" style="left:835.30px;top:108.18px;font-size:7.45px;color:#e3e3e3;">Z</div>
<div class="t" style="left:913.78px;top:108.18px;font-size:7.45px;color:#e3e3e3;">0 m</div>
<svg class="r" style="left:950.70px;top:109.10px;" width="8" height="9" viewBox="0 0 8 9"><rect x="0.8" y="4" width="5.6" height="4.2" rx="0.6" fill="none" stroke="#a8a8a8" stroke-width="0.85"/><path d="M3.4 4 V2.4 A1.7 1.7 0 0 1 6.9 2.4" fill="none" stroke="#a8a8a8" stroke-width="0.85"/></svg>
<div class="t" style="left:826.30px;top:122.78px;font-size:7.45px;color:#e3e3e3;">Rotation:</div>
<div class="r" style="left:826.2px;top:134.75px;width:108.5px;height:11.5px;background:#545454;border-radius:3px 3px 0 0"></div>
<div class="t" style="left:835.30px;top:135.08px;font-size:7.45px;color:#e3e3e3;">X</div>
<div class="t" style="left:919.08px;top:135.08px;font-size:7.45px;color:#e3e3e3;">0°</div>
<svg class="r" style="left:950.70px;top:136.00px;" width="8" height="9" viewBox="0 0 8 9"><rect x="0.8" y="4" width="5.6" height="4.2" rx="0.6" fill="none" stroke="#a8a8a8" stroke-width="0.85"/><path d="M3.4 4 V2.4 A1.7 1.7 0 0 1 6.9 2.4" fill="none" stroke="#a8a8a8" stroke-width="0.85"/></svg>
<div class="r" style="left:826.2px;top:146.85px;width:108.5px;height:11.5px;background:#545454;border-radius:0"></div>
<div class="t" style="left:835.30px;top:147.18px;font-size:7.45px;color:#e3e3e3;">Y</div>
<div class="t" style="left:919.08px;top:147.18px;font-size:7.45px;color:#e3e3e3;">0°</div>
<svg class="r" style="left:950.70px;top:148.10px;" width="8" height="9" viewBox="0 0 8 9"><rect x="0.8" y="4" width="5.6" height="4.2" rx="0.6" fill="none" stroke="#a8a8a8" stroke-width="0.85"/><path d="M3.4 4 V2.4 A1.7 1.7 0 0 1 6.9 2.4" fill="none" stroke="#a8a8a8" stroke-width="0.85"/></svg>
<div class="r" style="left:826.2px;top:159.05px;width:108.5px;height:11.5px;background:#545454;border-radius:0 0 3px 3px"></div>
<div class="t" style="left:835.30px;top:159.38px;font-size:7.45px;color:#e3e3e3;">Z</div>
<div class="t" style="left:919.08px;top:159.38px;font-size:7.45px;color:#e3e3e3;">0°</div>
<svg class="r" style="left:950.70px;top:160.30px;" width="8" height="9" viewBox="0 0 8 9"><rect x="0.8" y="4" width="5.6" height="4.2" rx="0.6" fill="none" stroke="#a8a8a8" stroke-width="0.85"/><path d="M3.4 4 V2.4 A1.7 1.7 0 0 1 6.9 2.4" fill="none" stroke="#a8a8a8" stroke-width="0.85"/></svg>
<div class="r" style="left:826.20px;top:174.00px;width:141.10px;height:11.20px;background:#282828;border-radius:3px;"></div>
<div class="t" style="left:830.50px;top:174.18px;font-size:7.45px;color:#e3e3e3;">XYZ Euler</div>
<svg class="r" style="left:958.60px;top:176.00px;" width="8" height="8" viewBox="0 0 8 8"><path d="M1.7999999999999998 2.9 L4 5.1 L6.2 2.9" stroke="#d0d0d0" stroke-width="1.1" fill="none" stroke-linecap="round" stroke-linejoin="round"/></svg>
<div class="t" style="left:826.30px;top:187.88px;font-size:7.45px;color:#e3e3e3;">Scale:</div>
<div class="r" style="left:826.2px;top:199.85px;width:108.5px;height:11.5px;background:#545454;border-radius:3px 3px 0 0"></div>
<div class="t" style="left:835.30px;top:200.18px;font-size:7.45px;color:#e3e3e3;">X</div>
<div class="t" style="left:907.56px;top:200.18px;font-size:7.45px;color:#e3e3e3;">1.000</div>
<svg class="r" style="left:950.70px;top:201.10px;" width="8" height="9" viewBox="0 0 8 9"><rect x="0.8" y="4" width="5.6" height="4.2" rx="0.6" fill="none" stroke="#a8a8a8" stroke-width="0.85"/><path d="M3.4 4 V2.4 A1.7 1.7 0 0 1 6.9 2.4" fill="none" stroke="#a8a8a8" stroke-width="0.85"/></svg>
<div class="r" style="left:826.2px;top:211.95px;width:108.5px;height:11.5px;background:#545454;border-radius:0"></div>
<div class="t" style="left:835.30px;top:212.28px;font-size:7.45px;color:#e3e3e3;">Y</div>
<div class="t" style="left:907.56px;top:212.28px;font-size:7.45px;color:#e3e3e3;">1.000</div>
<svg class="r" style="left:950.70px;top:213.20px;" width="8" height="9" viewBox="0 0 8 9"><rect x="0.8" y="4" width="5.6" height="4.2" rx="0.6" fill="none" stroke="#a8a8a8" stroke-width="0.85"/><path d="M3.4 4 V2.4 A1.7 1.7 0 0 1 6.9 2.4" fill="none" stroke="#a8a8a8" stroke-width="0.85"/></svg>
<div class="r" style="left:826.2px;top:224.15px;width:108.5px;height:11.5px;background:#545454;border-radius:0 0 3px 3px"></div>
<div class="t" style="left:835.30px;top:224.48px;font-size:7.45px;color:#e3e3e3;">Z</div>
<div class="t" style="left:907.56px;top:224.48px;font-size:7.45px;color:#e3e3e3;">1.000</div>
<svg class="r" style="left:950.70px;top:225.40px;" width="8" height="9" viewBox="0 0 8 9"><rect x="0.8" y="4" width="5.6" height="4.2" rx="0.6" fill="none" stroke="#a8a8a8" stroke-width="0.85"/><path d="M3.4 4 V2.4 A1.7 1.7 0 0 1 6.9 2.4" fill="none" stroke="#a8a8a8" stroke-width="0.85"/></svg>
<div class="t" style="left:826.30px;top:239.18px;font-size:7.45px;color:#e3e3e3;">Dimensions:</div>
<div class="r" style="left:826.2px;top:251.6px;width:141.1px;height:10.6px;background:#545454;border-radius:3px 3px 0 0"></div>
<div class="t" style="left:835.30px;top:251.48px;font-size:7.45px;color:#e3e3e3;">X</div>
<div class="t" style="left:931.88px;top:251.48px;font-size:7.45px;color:#e3e3e3;">0.697 m</div>
<div class="r" style="left:826.2px;top:263.1px;width:141.1px;height:12.0px;background:#545454;border-radius:0"></div>
<div class="t" style="left:835.30px;top:263.68px;font-size:7.45px;color:#e3e3e3;">Y</div>
<div class="t" style="left:931.88px;top:263.68px;font-size:7.45px;color:#e3e3e3;">0.249 m</div>
<div class="r" style="left:826.2px;top:276px;width:141.1px;height:11.8px;background:#545454;border-radius:0 0 3px 3px"></div>
<div class="t" style="left:835.30px;top:276.48px;font-size:7.45px;color:#e3e3e3;">Z</div>
<div class="t" style="left:931.88px;top:276.48px;font-size:7.45px;color:#e3e3e3;">0.515 m</div>
<div class="r" style="left:820.80px;top:294.80px;width:152.10px;height:15.10px;background:rgba(64,64,64,0.6);border-radius:3px;border:0.8px solid rgba(54,54,54,0.85)"></div>
<svg class="r" style="left:826.00px;top:298.60px;" width="8" height="8" viewBox="0 0 8 8"><path d="M2.9 1.7999999999999998 L5.1 4 L2.9 6.2" stroke="#d0d0d0" stroke-width="1.1" fill="none" stroke-linecap="round" stroke-linejoin="round"/></svg>
<div class="t" style="left:834.90px;top:296.98px;font-size:7.45px;color:#e3e3e3;">Edit Linked Library</div>
<svg class="r" style="left:959.50px;top:301.00px;" width="8" height="4" viewBox="0 0 8 4"><rect x="0" y="0" width="1" height="1" fill="#5a5a5a"/><rect x="0" y="2" width="1" height="1" fill="#5a5a5a"/><rect x="2" y="0" width="1" height="1" fill="#5a5a5a"/><rect x="2" y="2" width="1" height="1" fill="#5a5a5a"/><rect x="4" y="0" width="1" height="1" fill="#5a5a5a"/><rect x="4" y="2" width="1" height="1" fill="#5a5a5a"/><rect x="6" y="0" width="1" height="1" fill="#5a5a5a"/><rect x="6" y="2" width="1" height="1" fill="#5a5a5a"/></svg>
<div class="r" style="left:820.80px;top:311.70px;width:152.10px;height:15.10px;background:rgba(64,64,64,0.6);border-radius:3px;border:0.8px solid rgba(54,54,54,0.85)"></div>
<svg class="r" style="left:826.00px;top:316.00px;" width="8" height="8" viewBox="0 0 8 8"><path d="M2.9 1.7999999999999998 L5.1 4 L2.9 6.2" stroke="#d0d0d0" stroke-width="1.1" fill="none" stroke-linecap="round" stroke-linejoin="round"/></svg>
<div class="t" style="left:834.90px;top:314.48px;font-size:7.45px;color:#e3e3e3;">Align Tools</div>
<svg class="r" style="left:959.50px;top:318.50px;" width="8" height="4" viewBox="0 0 8 4"><rect x="0" y="0" width="1" height="1" fill="#5a5a5a"/><rect x="0" y="2" width="1" height="1" fill="#5a5a5a"/><rect x="2" y="0" width="1" height="1" fill="#5a5a5a"/><rect x="2" y="2" width="1" height="1" fill="#5a5a5a"/><rect x="4" y="0" width="1" height="1" fill="#5a5a5a"/><rect x="4" y="2" width="1" height="1" fill="#5a5a5a"/><rect x="6" y="0" width="1" height="1" fill="#5a5a5a"/><rect x="6" y="2" width="1" height="1" fill="#5a5a5a"/></svg>
<div class="r" style="left:977.80px;top:52.00px;width:10.20px;height:25.00px;background:#444444;border-radius:3px;"></div>
<div class="t" style="left:976.09px;top:58.50px;font-size:7.0px;color:#f0f0f0;transform:rotate(90deg);transform-origin:50% 50%;width:13.61px">Item</div>
<div class="r" style="left:977.80px;top:80.00px;width:10.20px;height:25.00px;background:#2a2a2a;border-radius:3px;"></div>
<div class="t" style="left:976.48px;top:86.50px;font-size:7.0px;color:#c4c4c4;transform:rotate(90deg);transform-origin:50% 50%;width:12.84px">Tool</div>
<div class="r" style="left:977.80px;top:108.00px;width:10.20px;height:26.00px;background:#2a2a2a;border-radius:3px;"></div>
<div class="t" style="left:975.38px;top:115.00px;font-size:7.0px;color:#c4c4c4;transform:rotate(90deg);transform-origin:50% 50%;width:15.05px">View</div>
<div class="r" style="left:977.80px;top:137.00px;width:10.20px;height:41.50px;background:#2a2a2a;border-radius:3px;"></div>
<div class="t" style="left:967.34px;top:151.75px;font-size:7.0px;color:#c4c4c4;transform:rotate(90deg);transform-origin:50% 50%;width:31.13px">Animation</div>
<div class="r" style="left:977.80px;top:181.70px;width:10.20px;height:32.30px;background:#2a2a2a;border-radius:3px;"></div>
<div class="t" style="left:971.42px;top:191.85px;font-size:7.0px;color:#c4c4c4;transform:rotate(90deg);transform-origin:50% 50%;width:22.95px">Grungit</div>
<div class="r" style="left:977.80px;top:218.00px;width:10.20px;height:54.40px;background:#2a2a2a;border-radius:3px;"></div>
<div class="t" style="left:961.49px;top:239.20px;font-size:7.0px;color:#c4c4c4;transform:rotate(90deg);transform-origin:50% 50%;width:42.81px">SpeedRetopo</div>
<div class="r" style="left:977.80px;top:276.30px;width:10.20px;height:35.40px;background:#2a2a2a;border-radius:3px;"></div>
<div class="t" style="left:970.26px;top:288.00px;font-size:7.0px;color:#c4c4c4;transform:rotate(90deg);transform-origin:50% 50%;width:25.28px">SFamily</div>
<div class="r" style="left:977.80px;top:314.80px;width:10.20px;height:30.00px;background:#2a2a2a;border-radius:3px;"></div>
<div class="t" style="left:972.40px;top:323.80px;font-size:7.0px;color:#c4c4c4;transform:rotate(90deg);transform-origin:50% 50%;width:21.01px">Create</div>
<div class="r" style="left:977.80px;top:349.40px;width:10.20px;height:21.20px;background:#2a2a2a;border-radius:3px;"></div>
<div class="t" style="left:976.87px;top:354.00px;font-size:7.0px;color:#c4c4c4;transform:rotate(90deg);transform-origin:50% 50%;width:12.06px">Edit</div>
<div class="r" style="left:977.80px;top:374.90px;width:10.20px;height:47.70px;background:#2a2a2a;border-radius:3px;"></div>
<div class="t" style="left:964.23px;top:392.75px;font-size:7.0px;color:#c4c4c4;transform:rotate(90deg);transform-origin:50% 50%;width:37.35px">PSD Layers</div>
<div class="r" style="left:992px;top:16px;width:206px;height:226px;background:#282828;border-radius:4px;overflow:hidden">
<div class="r" style="left:0.00px;top:21.45px;width:206.00px;height:12.50px;background:#2b2b2b;border-radius:0px;"></div>
<div class="r" style="left:0.00px;top:46.45px;width:206.00px;height:12.50px;background:#2b2b2b;border-radius:0px;"></div>
<div class="r" style="left:0.00px;top:71.45px;width:206.00px;height:12.50px;background:#2b2b2b;border-radius:0px;"></div>
<div class="r" style="left:0.00px;top:96.45px;width:206.00px;height:12.50px;background:#2b2b2b;border-radius:0px;"></div>
<div class="r" style="left:0.00px;top:121.45px;width:206.00px;height:12.50px;background:#2b2b2b;border-radius:0px;"></div>
<div class="r" style="left:0.00px;top:146.45px;width:206.00px;height:12.50px;background:#2b2b2b;border-radius:0px;"></div>
<div class="r" style="left:0.00px;top:171.45px;width:206.00px;height:12.50px;background:#2b2b2b;border-radius:0px;"></div>
<div class="r" style="left:0.00px;top:196.45px;width:206.00px;height:12.50px;background:#2b2b2b;border-radius:0px;"></div>
<div class="r" style="left:0.00px;top:221.45px;width:206.00px;height:12.50px;background:#2b2b2b;border-radius:0px;"></div>
<div class="r" style="left:19.60px;top:14.00px;width:0.70px;height:212.00px;background:#3e3e3e;border-radius:0px;"></div>
<div class="r" style="left:31.90px;top:14.00px;width:0.70px;height:195.00px;background:#3e3e3e;border-radius:0px;"></div>
<svg class="r" style="left:45.00px;top:34.00px;" width="2" height="44" viewBox="0 0 2 44"><line x1="0.5" y1="0" x2="0.5" y2="44" stroke="#4a4a4a" stroke-width="0.8" stroke-dasharray="1.5 1.5"/></svg>
<svg class="r" style="left:45.00px;top:121.00px;" width="2" height="88" viewBox="0 0 2 88"><line x1="0.5" y1="0" x2="0.5" y2="88" stroke="#4a4a4a" stroke-width="0.8" stroke-dasharray="1.5 1.5"/></svg>
<svg class="r" style="left:57.00px;top:184.00px;" width="2" height="24" viewBox="0 0 2 24"><line x1="0.5" y1="0" x2="0.5" y2="24" stroke="#4a4a4a" stroke-width="0.8" stroke-dasharray="1.5 1.5"/></svg>
<div class="r" style="left:38.50px;top:9.50px;width:11.50px;height:11.00px;background:#4a4a4a;border-radius:3px;"></div>
<svg class="r" style="left:39.50px;top:10.70px;" width="9" height="9" viewBox="0 0 9 9"><rect x="0.6" y="0.8" width="7.8" height="2.2" fill="#dcdcdc"/><path d="M1.2 3.6 H7.8 V8.2 H1.2Z M3 4.8 V5.8 H6 V4.8Z" fill="#dcdcdc" fill-rule="evenodd"/></svg>
<div class="t" style="left:53.70px;top:9.98px;font-size:7.45px;color:#e3e3e3;">pilot</div>
<svg class="r" style="left:165.00px;top:11.20px;" width="8" height="8" viewBox="0 0 8 8"><rect x="0.5" y="0.5" width="7" height="7" rx="1" fill="#e6e6e6"/><path d="M1.8 4 L3.4 5.7 L6.3 2.2" fill="none" stroke="#222" stroke-width="1.1"/></svg>
<svg class="r" style="left:177.00px;top:11.70px;" width="10" height="7" viewBox="0 0 10 7"><path d="M0.4 3.5 Q5 -1.6 9.6 3.5 Q5 8.6 0.4 3.5Z" fill="#e0e0e0"/><circle cx="5" cy="3.5" r="1.9" fill="#282828"/><circle cx="5" cy="3.5" r="0.8" fill="#e0e0e0"/></svg>
<svg class="r" style="left:189.70px;top:11.20px;" width="10" height="8" viewBox="0 0 10 8"><path d="M0.5 2 H2.8 L3.6 0.8 H6.4 L7.2 2 H9.5 V7.4 H0.5Z" fill="#e0e0e0"/><circle cx="5" cy="4.6" r="1.9" fill="#282828"/><circle cx="5" cy="4.6" r="0.8" fill="#e0e0e0"/></svg>
<svg class="r" style="left:41.30px;top:24.10px;" width="8" height="8" viewBox="0 0 8 8"><path d="M1.7999999999999998 2.9 L4 5.1 L6.2 2.9" stroke="#c8c8c8" stroke-width="1.1" fill="none" stroke-linecap="round" stroke-linejoin="round"/></svg>
<svg class="r" style="left:51.80px;top:23.20px;" width="9" height="9" viewBox="0 0 9 9"><rect x="0.6" y="0.8" width="7.8" height="2.2" fill="#dcdcdc"/><path d="M1.2 3.6 H7.8 V8.2 H1.2Z M3 4.8 V5.8 H6 V4.8Z" fill="#dcdcdc" fill-rule="evenodd"/></svg>
<div class="t" style="left:65.70px;top:22.28px;font-size:7.45px;color:#e3e3e3;">head</div>
<svg class="r" style="left:165.00px;top:23.70px;" width="8" height="8" viewBox="0 0 8 8"><rect x="0.5" y="0.5" width="7" height="7" rx="1" fill="#e6e6e6"/><path d="M1.8 4 L3.4 5.7 L6.3 2.2" fill="none" stroke="#222" stroke-width="1.1"/></svg>
<svg class="r" style="left:177.00px;top:24.20px;" width="10" height="7" viewBox="0 0 10 7"><path d="M0.4 3.5 Q5 -1.6 9.6 3.5 Q5 8.6 0.4 3.5Z" fill="#e0e0e0"/><circle cx="5" cy="3.5" r="1.9" fill="#282828"/><circle cx="5" cy="3.5" r="0.8" fill="#e0e0e0"/></svg>
<svg class="r" style="left:189.70px;top:23.70px;" width="10" height="8" viewBox="0 0 10 8"><path d="M0.5 2 H2.8 L3.6 0.8 H6.4 L7.2 2 H9.5 V7.4 H0.5Z" fill="#e0e0e0"/><circle cx="5" cy="4.6" r="1.9" fill="#282828"/><circle cx="5" cy="4.6" r="0.8" fill="#e0e0e0"/></svg>
<svg class="r" style="left:53.30px;top:36.20px;" width="8" height="8" viewBox="0 0 8 8"><path d="M2.9 1.7999999999999998 L5.1 4 L2.9 6.2" stroke="#c8c8c8" stroke-width="1.1" fill="none" stroke-linecap="round" stroke-linejoin="round"/></svg>
<svg class="r" style="left:65.20px;top:35.70px;" width="9" height="9" viewBox="0 0 9 9"><path d="M1.2 1.6 H7.8 L4.5 7.8Z" fill="none" stroke="#e8874a" stroke-width="1.5" stroke-linejoin="round" opacity="1"/></svg>
<div class="t" style="left:78.70px;top:34.77px;font-size:7.54px;color:#e3e3e3;">eye.left</div>
<svg class="r" style="left:117.50px;top:35.70px;" width="9" height="9" viewBox="0 0 9 9"><g opacity="1"><path d="M1.5 1.8 H7.5 L4.5 7.4Z" fill="none" stroke="#35b58a" stroke-width="0.9"/><circle cx="1.5" cy="1.8" r="1.2" fill="#35b58a"/><circle cx="7.5" cy="1.8" r="1.2" fill="#35b58a"/><circle cx="4.5" cy="7.4" r="1.2" fill="#35b58a"/></g></svg>
<svg class="r" style="left:177.00px;top:36.70px;" width="10" height="7" viewBox="0 0 10 7"><path d="M0.4 3.5 Q5 -1.6 9.6 3.5 Q5 8.6 0.4 3.5Z" fill="#e0e0e0"/><circle cx="5" cy="3.5" r="1.9" fill="#282828"/><circle cx="5" cy="3.5" r="0.8" fill="#e0e0e0"/></svg>
<svg class="r" style="left:189.70px;top:36.20px;" width="10" height="8" viewBox="0 0 10 8"><path d="M0.5 2 H2.8 L3.6 0.8 H6.4 L7.2 2 H9.5 V7.4 H0.5Z" fill="#e0e0e0"/><circle cx="5" cy="4.6" r="1.9" fill="#282828"/><circle cx="5" cy="4.6" r="0.8" fill="#e0e0e0"/></svg>
<svg class="r" style="left:53.30px;top:48.70px;" width="8" height="8" viewBox="0 0 8 8"><path d="M2.9 1.7999999999999998 L5.1 4 L2.9 6.2" stroke="#c8c8c8" stroke-width="1.1" fill="none" stroke-linecap="round" stroke-linejoin="round"/></svg>
<svg class="r" style="left:65.20px;top:48.20px;" width="9" height="9" viewBox="0 0 9 9"><path d="M1.2 1.6 H7.8 L4.5 7.8Z" fill="none" stroke="#e8874a" stroke-width="1.5" stroke-linejoin="round" opacity="1"/></svg>
<div class="t" style="left:78.70px;top:47.28px;font-size:7.38px;color:#e3e3e3;">eye.right</div>
<svg class="r" style="left:121.80px;top:48.20px;" width="9" height="9" viewBox="0 0 9 9"><g opacity="1"><path d="M1.5 1.8 H7.5 L4.5 7.4Z" fill="none" stroke="#35b58a" stroke-width="0.9"/><circle cx="1.5" cy="1.8" r="1.2" fill="#35b58a"/><circle cx="7.5" cy="1.8" r="1.2" fill="#35b58a"/><circle cx="4.5" cy="7.4" r="1.2" fill="#35b58a"/></g></svg>
<svg class="r" style="left:177.00px;top:49.20px;" width="10" height="7" viewBox="0 0 10 7"><path d="M0.4 3.5 Q5 -1.6 9.6 3.5 Q5 8.6 0.4 3.5Z" fill="#e0e0e0"/><circle cx="5" cy="3.5" r="1.9" fill="#282828"/><circle cx="5" cy="3.5" r="0.8" fill="#e0e0e0"/></svg>
<svg class="r" style="left:189.70px;top:48.70px;" width="10" height="8" viewBox="0 0 10 8"><path d="M0.5 2 H2.8 L3.6 0.8 H6.4 L7.2 2 H9.5 V7.4 H0.5Z" fill="#e0e0e0"/><circle cx="5" cy="4.6" r="1.9" fill="#282828"/><circle cx="5" cy="4.6" r="0.8" fill="#e0e0e0"/></svg>
<svg class="r" style="left:53.30px;top:61.20px;" width="8" height="8" viewBox="0 0 8 8"><path d="M2.9 1.7999999999999998 L5.1 4 L2.9 6.2" stroke="#c8c8c8" stroke-width="1.1" fill="none" stroke-linecap="round" stroke-linejoin="round"/></svg>
<svg class="r" style="left:65.20px;top:60.70px;" width="9" height="9" viewBox="0 0 9 9"><path d="M1.2 1.6 H7.8 L4.5 7.8Z" fill="none" stroke="#e8874a" stroke-width="1.5" stroke-linejoin="round" opacity="1"/></svg>
<div class="t" style="left:78.70px;top:59.78px;font-size:7.41px;color:#e3e3e3;">mouth cavity</div>
<svg class="r" style="left:134.50px;top:60.70px;" width="9" height="9" viewBox="0 0 9 9"><path d="M1.3 7.7 L4.6 4.4" stroke="#5f93dc" stroke-width="2" stroke-linecap="round" opacity="1"/><path d="M6.3 0.8 A2.6 2.6 0 1 0 8.3 3 L6.6 4 L5.2 2.7Z" fill="#5f93dc" opacity="1"/></svg>
<svg class="r" style="left:147.50px;top:60.70px;" width="9" height="9" viewBox="0 0 9 9"><g fill="#b4b4b4"><rect x="0.5" y="3" width="2" height="2"/><rect x="3.5" y="0.8" width="2" height="2"/><rect x="3.5" y="3.5" width="2" height="2"/><rect x="3.5" y="6.2" width="2" height="2"/><rect x="6.5" y="2" width="2" height="2"/><rect x="6.5" y="5" width="2" height="2"/></g></svg>
<svg class="r" style="left:159.00px;top:60.20px;" width="4" height="5" viewBox="0 0 4 5"><path d="M0.5 0.5 H3.5 L2 3.8Z" fill="none" stroke="#35b58a" stroke-width="0.8"/></svg>
<svg class="r" style="left:177.00px;top:61.70px;" width="10" height="7" viewBox="0 0 10 7"><path d="M0.4 3.5 Q5 -1.6 9.6 3.5 Q5 8.6 0.4 3.5Z" fill="#e0e0e0"/><circle cx="5" cy="3.5" r="1.9" fill="#282828"/><circle cx="5" cy="3.5" r="0.8" fill="#e0e0e0"/></svg>
<svg class="r" style="left:189.70px;top:61.20px;" width="10" height="8" viewBox="0 0 10 8"><path d="M0.5 2 H2.8 L3.6 0.8 H6.4 L7.2 2 H9.5 V7.4 H0.5Z" fill="#e0e0e0"/><circle cx="5" cy="4.6" r="1.9" fill="#282828"/><circle cx="5" cy="4.6" r="0.8" fill="#e0e0e0"/></svg>
<svg class="r" style="left:41.30px;top:73.70px;" width="8" height="8" viewBox="0 0 8 8"><path d="M2.9 1.7999999999999998 L5.1 4 L2.9 6.2" stroke="#c8c8c8" stroke-width="1.1" fill="none" stroke-linecap="round" stroke-linejoin="round"/></svg>
<svg class="r" style="left:52.80px;top:73.20px;" width="9" height="9" viewBox="0 0 9 9"><path d="M1.2 1.6 H7.8 L4.5 7.8Z" fill="none" stroke="#e8874a" stroke-width="1.5" stroke-linejoin="round" opacity="1"/></svg>
<div class="t" style="left:65.70px;top:72.28px;font-size:7.36px;color:#e3e3e3;">BSurfaceMesh</div>
<svg class="r" style="left:127.80px;top:73.20px;" width="9" height="9" viewBox="0 0 9 9"><path d="M1.3 7.7 L4.6 4.4" stroke="#5f93dc" stroke-width="2" stroke-linecap="round" opacity="1"/><path d="M6.3 0.8 A2.6 2.6 0 1 0 8.3 3 L6.6 4 L5.2 2.7Z" fill="#5f93dc" opacity="1"/></svg>
<svg class="r" style="left:140.80px;top:73.20px;" width="9" height="9" viewBox="0 0 9 9"><g opacity="1"><path d="M1.5 1.8 H7.5 L4.5 7.4Z" fill="none" stroke="#35b58a" stroke-width="0.9"/><circle cx="1.5" cy="1.8" r="1.2" fill="#35b58a"/><circle cx="7.5" cy="1.8" r="1.2" fill="#35b58a"/><circle cx="4.5" cy="7.4" r="1.2" fill="#35b58a"/></g></svg>
<svg class="r" style="left:177.00px;top:74.20px;" width="10" height="7" viewBox="0 0 10 7"><path d="M0.4 3.5 Q5 -1.6 9.6 3.5 Q5 8.6 0.4 3.5Z" fill="#e0e0e0"/><circle cx="5" cy="3.5" r="1.9" fill="#282828"/><circle cx="5" cy="3.5" r="0.8" fill="#e0e0e0"/></svg>
<svg class="r" style="left:189.70px;top:73.70px;" width="10" height="8" viewBox="0 0 10 8"><path d="M0.5 2 H2.8 L3.6 0.8 H6.4 L7.2 2 H9.5 V7.4 H0.5Z" fill="#e0e0e0"/><circle cx="5" cy="4.6" r="1.9" fill="#282828"/><circle cx="5" cy="4.6" r="0.8" fill="#e0e0e0"/></svg>
<svg class="r" style="left:41.30px;top:86.20px;" width="8" height="8" viewBox="0 0 8 8"><path d="M2.9 1.7999999999999998 L5.1 4 L2.9 6.2" stroke="#6a6a6a" stroke-width="1.1" fill="none" stroke-linecap="round" stroke-linejoin="round"/></svg>
<svg class="r" style="left:52.80px;top:85.70px;" width="9" height="9" viewBox="0 0 9 9"><path d="M1.2 1.6 H7.8 L4.5 7.8Z" fill="none" stroke="#8a5a3a" stroke-width="1.5" stroke-linejoin="round" opacity="1"/></svg>
<div class="t" style="left:65.70px;top:84.77px;font-size:7.50px;color:#7d7d7d;">jacket</div>
<svg class="r" style="left:100.20px;top:85.70px;" width="9" height="9" viewBox="0 0 9 9"><path d="M1.3 7.7 L4.6 4.4" stroke="#3f5f8f" stroke-width="2" stroke-linecap="round" opacity="1"/><path d="M6.3 0.8 A2.6 2.6 0 1 0 8.3 3 L6.6 4 L5.2 2.7Z" fill="#3f5f8f" opacity="1"/></svg>
<svg class="r" style="left:113.50px;top:85.70px;" width="9" height="9" viewBox="0 0 9 9"><g opacity="1"><path d="M1.5 1.8 H7.5 L4.5 7.4Z" fill="none" stroke="#2a7a60" stroke-width="0.9"/><circle cx="1.5" cy="1.8" r="1.2" fill="#2a7a60"/><circle cx="7.5" cy="1.8" r="1.2" fill="#2a7a60"/><circle cx="4.5" cy="7.4" r="1.2" fill="#2a7a60"/></g></svg>
<svg class="r" style="left:177.00px;top:86.70px;" width="10" height="7" viewBox="0 0 10 7"><path d="M0.8 2.6 Q5 7 9.2 2.6" fill="none" stroke="#7a7a7a" stroke-width="0.9"/></svg>
<svg class="r" style="left:189.70px;top:86.20px;" width="10" height="8" viewBox="0 0 10 8"><path d="M0.5 2 H2.8 L3.6 0.8 H6.4 L7.2 2 H9.5 V7.4 H0.5Z" fill="#e0e0e0"/><circle cx="5" cy="4.6" r="1.9" fill="#282828"/><circle cx="5" cy="4.6" r="0.8" fill="#e0e0e0"/></svg>
<svg class="r" style="left:41.30px;top:98.70px;" width="8" height="8" viewBox="0 0 8 8"><path d="M2.9 1.7999999999999998 L5.1 4 L2.9 6.2" stroke="#c8c8c8" stroke-width="1.1" fill="none" stroke-linecap="round" stroke-linejoin="round"/></svg>
<div class="r" style="left:51.60px;top:97.00px;width:11.40px;height:11.40px;background:#6a6a6a;border-radius:2.5px;"></div>
<svg class="r" style="left:52.80px;top:98.20px;" width="9" height="9" viewBox="0 0 9 9"><path d="M1.2 1.6 H7.8 L4.5 7.8Z" fill="none" stroke="#f29a5e" stroke-width="1.5" stroke-linejoin="round" opacity="1"/></svg>
<div class="t" style="left:65.70px;top:97.28px;font-size:7.48px;color:#f2f2f2;">long sleeve button up shirt</div>
<svg class="r" style="left:177.00px;top:99.20px;" width="10" height="7" viewBox="0 0 10 7"><path d="M0.4 3.5 Q5 -1.6 9.6 3.5 Q5 8.6 0.4 3.5Z" fill="#e0e0e0"/><circle cx="5" cy="3.5" r="1.9" fill="#282828"/><circle cx="5" cy="3.5" r="0.8" fill="#e0e0e0"/></svg>
<svg class="r" style="left:189.70px;top:98.70px;" width="10" height="8" viewBox="0 0 10 8"><path d="M0.5 2 H2.8 L3.6 0.8 H6.4 L7.2 2 H9.5 V7.4 H0.5Z" fill="#e0e0e0"/><circle cx="5" cy="4.6" r="1.9" fill="#282828"/><circle cx="5" cy="4.6" r="0.8" fill="#e0e0e0"/></svg>
<svg class="r" style="left:41.30px;top:111.60px;" width="8" height="8" viewBox="0 0 8 8"><path d="M1.7999999999999998 2.9 L4 5.1 L6.2 2.9" stroke="#c8c8c8" stroke-width="1.1" fill="none" stroke-linecap="round" stroke-linejoin="round"/></svg>
<svg class="r" style="left:52.80px;top:110.70px;" width="9" height="9" viewBox="0 0 9 9"><path d="M1.2 1.6 H7.8 L4.5 7.8Z" fill="none" stroke="#e8874a" stroke-width="1.5" stroke-linejoin="round" opacity="1"/></svg>
<div class="t" style="left:65.70px;top:109.76px;font-size:7.96px;color:#e3e3e3;">pilot</div>
<svg class="r" style="left:177.00px;top:111.70px;" width="10" height="7" viewBox="0 0 10 7"><path d="M0.4 3.5 Q5 -1.6 9.6 3.5 Q5 8.6 0.4 3.5Z" fill="#e0e0e0"/><circle cx="5" cy="3.5" r="1.9" fill="#282828"/><circle cx="5" cy="3.5" r="0.8" fill="#e0e0e0"/></svg>
<svg class="r" style="left:189.70px;top:111.20px;" width="10" height="8" viewBox="0 0 10 8"><path d="M0.5 2 H2.8 L3.6 0.8 H6.4 L7.2 2 H9.5 V7.4 H0.5Z" fill="#e0e0e0"/><circle cx="5" cy="4.6" r="1.9" fill="#282828"/><circle cx="5" cy="4.6" r="0.8" fill="#e0e0e0"/></svg>
<svg class="r" style="left:53.30px;top:123.70px;" width="8" height="8" viewBox="0 0 8 8"><path d="M2.9 1.7999999999999998 L5.1 4 L2.9 6.2" stroke="#c8c8c8" stroke-width="1.1" fill="none" stroke-linecap="round" stroke-linejoin="round"/></svg>
<svg class="r" style="left:65.20px;top:123.20px;" width="9" height="9" viewBox="0 0 9 9"><g opacity="1"><path d="M1.5 1.8 H7.5 L4.5 7.4Z" fill="none" stroke="#35b58a" stroke-width="0.9"/><circle cx="1.5" cy="1.8" r="1.2" fill="#35b58a"/><circle cx="7.5" cy="1.8" r="1.2" fill="#35b58a"/><circle cx="4.5" cy="7.4" r="1.2" fill="#35b58a"/></g></svg>
<div class="t" style="left:78.70px;top:122.28px;font-size:7.38px;color:#e3e3e3;">RetopoFlow.001</div>
<svg class="r" style="left:146.50px;top:123.20px;" width="11" height="10" viewBox="0 0 11 10"><circle cx="4.6" cy="4.6" r="3.9" fill="#d95a5a"/><path d="M4.6 0.7 A3.9 3.9 0 0 1 8.5 4.6 H4.6Z" fill="#f2c9c9"/><path d="M0.7 4.6 H4.6 V8.5 A3.9 3.9 0 0 1 0.7 4.6Z" fill="#f2c9c9" opacity="0.6"/><path d="M8 7 L10 9.5 H8Z" fill="#d95a5a"/></svg>
<svg class="r" style="left:53.30px;top:136.20px;" width="8" height="8" viewBox="0 0 8 8"><path d="M2.9 1.7999999999999998 L5.1 4 L2.9 6.2" stroke="#c8c8c8" stroke-width="1.1" fill="none" stroke-linecap="round" stroke-linejoin="round"/></svg>
<svg class="r" style="left:65.20px;top:135.70px;" width="9" height="9" viewBox="0 0 9 9"><path d="M1.3 7.7 L4.6 4.4" stroke="#5f93dc" stroke-width="2" stroke-linecap="round" opacity="1"/><path d="M6.3 0.8 A2.6 2.6 0 1 0 8.3 3 L6.6 4 L5.2 2.7Z" fill="#5f93dc" opacity="1"/></svg>
<div class="t" style="left:78.70px;top:134.78px;font-size:7.47px;color:#e3e3e3;">Modifiers</div>
<div class="r" style="left:122.50px;top:134.70px;width:12.50px;height:11.00px;background:#5a5a5a;border-radius:2.5px;"></div>
<svg class="r" style="left:124.20px;top:135.70px;" width="9" height="9" viewBox="0 0 9 9"><g fill="none" stroke="#5f93dc" stroke-width="0.9"><rect x="0.6" y="0.6" width="7.8" height="7.8"/><path d="M3.2 0.6V8.4M5.8 0.6V8.4M0.6 3.2H8.4M0.6 5.8H8.4"/></g></svg>
<svg class="r" style="left:53.30px;top:148.70px;" width="8" height="8" viewBox="0 0 8 8"><path d="M2.9 1.7999999999999998 L5.1 4 L2.9 6.2" stroke="#c8c8c8" stroke-width="1.1" fill="none" stroke-linecap="round" stroke-linejoin="round"/></svg>
<svg class="r" style="left:65.20px;top:148.20px;" width="9" height="9" viewBox="0 0 9 9"><g fill="none" stroke="#e8874a" stroke-width="1.2" stroke-linecap="round"><path d="M1 8 C1 5 1.5 2.5 3.6 1"/><path d="M3.8 8 C3.8 5.6 4.4 3.6 6 2.4"/><path d="M6.4 8 C6.4 6.4 6.9 5.2 8.2 4.4"/></g></svg>
<div class="t" style="left:78.70px;top:147.28px;font-size:7.38px;color:#e3e3e3;">eyebrows</div>
<svg class="r" style="left:124.50px;top:148.20px;" width="9" height="9" viewBox="0 0 9 9"><path d="M1.3 7.7 L4.6 4.4" stroke="#5f93dc" stroke-width="2" stroke-linecap="round" opacity="1"/><path d="M6.3 0.8 A2.6 2.6 0 1 0 8.3 3 L6.6 4 L5.2 2.7Z" fill="#5f93dc" opacity="1"/></svg>
<svg class="r" style="left:137.50px;top:148.20px;" width="9" height="9" viewBox="0 0 9 9"><g fill="none" stroke="#35b58a" stroke-width="1.2" stroke-linecap="round"><path d="M1 8 C1 5 1.5 2.5 3.6 1"/><path d="M3.8 8 C3.8 5.6 4.4 3.6 6 2.4"/><path d="M6.4 8 C6.4 6.4 6.9 5.2 8.2 4.4"/></g></svg>
<svg class="r" style="left:177.00px;top:149.20px;" width="10" height="7" viewBox="0 0 10 7"><path d="M0.4 3.5 Q5 -1.6 9.6 3.5 Q5 8.6 0.4 3.5Z" fill="#e0e0e0"/><circle cx="5" cy="3.5" r="1.9" fill="#282828"/><circle cx="5" cy="3.5" r="0.8" fill="#e0e0e0"/></svg>
<svg class="r" style="left:189.70px;top:148.70px;" width="10" height="8" viewBox="0 0 10 8"><path d="M0.5 2 H2.8 L3.6 0.8 H6.4 L7.2 2 H9.5 V7.4 H0.5Z" fill="#e0e0e0"/><circle cx="5" cy="4.6" r="1.9" fill="#282828"/><circle cx="5" cy="4.6" r="0.8" fill="#e0e0e0"/></svg>
<svg class="r" style="left:53.30px;top:161.20px;" width="8" height="8" viewBox="0 0 8 8"><path d="M2.9 1.7999999999999998 L5.1 4 L2.9 6.2" stroke="#c8c8c8" stroke-width="1.1" fill="none" stroke-linecap="round" stroke-linejoin="round"/></svg>
<svg class="r" style="left:65.20px;top:160.70px;" width="9" height="9" viewBox="0 0 9 9"><g fill="none" stroke="#e8874a" stroke-width="1.2" stroke-linecap="round"><path d="M1 8 C1 5 1.5 2.5 3.6 1"/><path d="M3.8 8 C3.8 5.6 4.4 3.6 6 2.4"/><path d="M6.4 8 C6.4 6.4 6.9 5.2 8.2 4.4"/></g></svg>
<div class="t" style="left:78.70px;top:159.78px;font-size:7.24px;color:#e3e3e3;">eyelashes</div>
<svg class="r" style="left:125.20px;top:160.70px;" width="9" height="9" viewBox="0 0 9 9"><path d="M1.3 7.7 L4.6 4.4" stroke="#5f93dc" stroke-width="2" stroke-linecap="round" opacity="1"/><path d="M6.3 0.8 A2.6 2.6 0 1 0 8.3 3 L6.6 4 L5.2 2.7Z" fill="#5f93dc" opacity="1"/></svg>
<svg class="r" style="left:137.50px;top:160.70px;" width="9" height="9" viewBox="0 0 9 9"><g fill="none" stroke="#35b58a" stroke-width="1.2" stroke-linecap="round"><path d="M1 8 C1 5 1.5 2.5 3.6 1"/><path d="M3.8 8 C3.8 5.6 4.4 3.6 6 2.4"/><path d="M6.4 8 C6.4 6.4 6.9 5.2 8.2 4.4"/></g></svg>
<svg class="r" style="left:177.00px;top:161.70px;" width="10" height="7" viewBox="0 0 10 7"><path d="M0.4 3.5 Q5 -1.6 9.6 3.5 Q5 8.6 0.4 3.5Z" fill="#e0e0e0"/><circle cx="5" cy="3.5" r="1.9" fill="#282828"/><circle cx="5" cy="3.5" r="0.8" fill="#e0e0e0"/></svg>
<svg class="r" style="left:189.70px;top:161.20px;" width="10" height="8" viewBox="0 0 10 8"><path d="M0.5 2 H2.8 L3.6 0.8 H6.4 L7.2 2 H9.5 V7.4 H0.5Z" fill="#e0e0e0"/><circle cx="5" cy="4.6" r="1.9" fill="#282828"/><circle cx="5" cy="4.6" r="0.8" fill="#e0e0e0"/></svg>
<svg class="r" style="left:53.30px;top:174.10px;" width="8" height="8" viewBox="0 0 8 8"><path d="M1.7999999999999998 2.9 L4 5.1 L6.2 2.9" stroke="#c8c8c8" stroke-width="1.1" fill="none" stroke-linecap="round" stroke-linejoin="round"/></svg>
<svg class="r" style="left:65.20px;top:173.20px;" width="9" height="9" viewBox="0 0 9 9"><g fill="none" stroke="#e8874a" stroke-width="1.2" stroke-linecap="round"><path d="M1 8 C1 5 1.5 2.5 3.6 1"/><path d="M3.8 8 C3.8 5.6 4.4 3.6 6 2.4"/><path d="M6.4 8 C6.4 6.4 6.9 5.2 8.2 4.4"/></g></svg>
<div class="t" style="left:78.70px;top:172.28px;font-size:7.20px;color:#e3e3e3;">hair</div>
<svg class="r" style="left:177.00px;top:174.20px;" width="10" height="7" viewBox="0 0 10 7"><path d="M0.4 3.5 Q5 -1.6 9.6 3.5 Q5 8.6 0.4 3.5Z" fill="#e0e0e0"/><circle cx="5" cy="3.5" r="1.9" fill="#282828"/><circle cx="5" cy="3.5" r="0.8" fill="#e0e0e0"/></svg>
<svg class="r" style="left:189.70px;top:173.70px;" width="10" height="8" viewBox="0 0 10 8"><path d="M0.5 2 H2.8 L3.6 0.8 H6.4 L7.2 2 H9.5 V7.4 H0.5Z" fill="#e0e0e0"/><circle cx="5" cy="4.6" r="1.9" fill="#282828"/><circle cx="5" cy="4.6" r="0.8" fill="#e0e0e0"/></svg>
<svg class="r" style="left:77.80px;top:185.70px;" width="9" height="9" viewBox="0 0 9 9"><g fill="none" stroke="#35b58a" stroke-width="1.2" stroke-linecap="round"><path d="M1 8 C1 5 1.5 2.5 3.6 1"/><path d="M3.8 8 C3.8 5.6 4.4 3.6 6 2.4"/><path d="M6.4 8 C6.4 6.4 6.9 5.2 8.2 4.4"/></g></svg>
<div class="t" style="left:90.70px;top:184.78px;font-size:7.49px;color:#e3e3e3;">Curves.001</div>
<svg class="r" style="left:65.70px;top:198.70px;" width="8" height="8" viewBox="0 0 8 8"><path d="M2.9 1.7999999999999998 L5.1 4 L2.9 6.2" stroke="#c8c8c8" stroke-width="1.1" fill="none" stroke-linecap="round" stroke-linejoin="round"/></svg>
<svg class="r" style="left:77.50px;top:198.20px;" width="9" height="9" viewBox="0 0 9 9"><path d="M1.3 7.7 L4.6 4.4" stroke="#5f93dc" stroke-width="2" stroke-linecap="round" opacity="1"/><path d="M6.3 0.8 A2.6 2.6 0 1 0 8.3 3 L6.6 4 L5.2 2.7Z" fill="#5f93dc" opacity="1"/></svg>
<div class="t" style="left:90.70px;top:197.27px;font-size:7.54px;color:#e3e3e3;">Modifiers</div>
<svg class="r" style="left:135.80px;top:198.20px;" width="9" height="9" viewBox="0 0 9 9"><g fill="#5f93dc"><circle cx="2" cy="2.2" r="1.3"/><circle cx="5.4" cy="1.6" r="1"/><circle cx="6" cy="5.8" r="2.2"/><circle cx="2.2" cy="6" r="1.1"/></g></svg>
<svg class="r" style="left:149.20px;top:198.20px;" width="9" height="9" viewBox="0 0 9 9"><g fill="#5f93dc"><circle cx="2" cy="2.2" r="1.3"/><circle cx="5.4" cy="1.6" r="1"/><circle cx="6" cy="5.8" r="2.2"/><circle cx="2.2" cy="6" r="1.1"/></g></svg>
<div class="r" style="left:159.80px;top:197.70px;width:1.80px;height:10.00px;background:#7a7a7a;border-radius:1px;"></div>
<svg class="r" style="left:29.00px;top:211.60px;" width="8" height="8" viewBox="0 0 8 8"><path d="M1.7999999999999998 2.9 L4 5.1 L6.2 2.9" stroke="#8a8a8a" stroke-width="1.1" fill="none" stroke-linecap="round" stroke-linejoin="round"/></svg>
<svg class="r" style="left:39.50px;top:210.70px;" width="9" height="9" viewBox="0 0 9 9"><rect x="0.6" y="0.8" width="7.8" height="2.2" fill="#8a8a8a"/><path d="M1.2 3.6 H7.8 V8.2 H1.2Z M3 4.8 V5.8 H6 V4.8Z" fill="#8a8a8a" fill-rule="evenodd"/></svg>
<div class="t" style="left:53.70px;top:209.78px;font-size:7.20px;color:#7d7d7d;">helpers</div>
<svg class="r" style="left:165.00px;top:211.20px;" width="8" height="8" viewBox="0 0 8 8"><rect x="0.5" y="0.5" width="7" height="7" rx="1" fill="#e6e6e6"/><path d="M1.8 4 L3.4 5.7 L6.3 2.2" fill="none" stroke="#222" stroke-width="1.1"/></svg>
<svg class="r" style="left:177.00px;top:211.70px;" width="10" height="7" viewBox="0 0 10 7"><path d="M0.8 2.6 Q5 7 9.2 2.6" fill="none" stroke="#5a5a5a" stroke-width="0.9"/></svg>
<svg class="r" style="left:189.70px;top:211.20px;" width="10" height="8" viewBox="0 0 10 8"><path d="M0.8 2.2 H2.9 L3.7 1 H6.3 L7.1 2.2 H9.2 V7.2 H0.8Z" fill="none" stroke="#5a5a5a" stroke-width="0.8"/><circle cx="5" cy="4.6" r="1.5" fill="none" stroke="#5a5a5a" stroke-width="0.8"/></svg>
<svg class="r" style="left:48.00px;top:222.20px;" width="60" height="6" viewBox="0 0 60 6"><path d="M2 3 L8 5 M12 2 L22 4" stroke="#8a5a3a" stroke-width="1"/><path d="M40 3 L47 3 M50 3 L58 3" stroke="#2a7a60" stroke-width="1"/></svg>
<div class="r" style="left:0.00px;top:0.00px;width:206.00px;height:15.40px;background:#292929;border-radius:0px;"></div>
<div class="r" style="left:6.80px;top:2.00px;width:18.90px;height:11.60px;background:#262626;border-radius:3px;border:0.7px solid #3a3a3a"></div>
<div class="r" style="left:30.00px;top:2.00px;width:18.70px;height:11.60px;background:#262626;border-radius:3px;border:0.7px solid #3a3a3a"></div>
<div class="r" style="left:166.50px;top:2.00px;width:18.90px;height:11.60px;background:#262626;border-radius:3px;border:0.7px solid #3a3a3a"></div>
<div class="r" style="left:204.20px;top:36.00px;width:1.20px;height:153.00px;background:#3a3a3a;border-radius:1px;"></div>
<svg class="r" style="left:7.00px;top:3.50px;" width="11" height="10" viewBox="0 0 11 10"><g fill="#dcdcdc"><rect x="0.5" y="0.5" width="3" height="2.4"/><rect x="4.5" y="3.8" width="6" height="2.2"/><rect x="4.5" y="7.3" width="6" height="2.2"/><path d="M1.6 2.9 V8.6 H4.5 V8 H2.3 V5.2 H4.5 V4.6 H2.3 V2.9Z"/></g></svg>
<svg class="r" style="left:17.50px;top:4.70px;" width="8" height="8" viewBox="0 0 8 8"><path d="M1.7999999999999998 2.9 L4 5.1 L6.2 2.9" stroke="#c8c8c8" stroke-width="1.1" fill="none" stroke-linecap="round" stroke-linejoin="round"/></svg>
<svg class="r" style="left:31.50px;top:3.50px;" width="11" height="10" viewBox="0 0 11 10"><rect x="0.8" y="1.5" width="7" height="6" fill="none" stroke="#d8d8d8" stroke-width="0.9"/><rect x="3" y="3" width="7" height="6.3" fill="#d8d8d8"/><path d="M4 8 L6 5 L7.2 6.6 L8 5.8 L9.3 8Z" fill="#2b2b2b"/></svg>
<svg class="r" style="left:41.00px;top:4.70px;" width="8" height="8" viewBox="0 0 8 8"><path d="M1.7999999999999998 2.9 L4 5.1 L6.2 2.9" stroke="#c8c8c8" stroke-width="1.1" fill="none" stroke-linecap="round" stroke-linejoin="round"/></svg>
<div class="r" style="left:60.50px;top:2.50px;width:72.50px;height:11.30px;background:#1d1d1d;border-radius:3px;"></div>
<svg class="r" style="left:63.00px;top:4.00px;" width="9" height="9" viewBox="0 0 9 9"><circle cx="3.6" cy="3.6" r="2.7" fill="none" stroke="#d0d0d0" stroke-width="1"/><path d="M5.6 5.6 L8.3 8.3" stroke="#d0d0d0" stroke-width="1.2" stroke-linecap="round"/></svg>
<div class="t" style="left:76.30px;top:1.99px;font-size:7.01px;color:#6e6e6e;">Search</div>
<svg class="r" style="left:166.50px;top:3.50px;" width="11" height="10" viewBox="0 0 11 10"><path d="M0.8 0.8 H9.6 L6.3 5 V9 L4.2 7.8 V5Z" fill="none" stroke="#dcdcdc" stroke-width="0.9" stroke-linejoin="round"/></svg>
<svg class="r" style="left:177.80px;top:4.70px;" width="8" height="8" viewBox="0 0 8 8"><path d="M1.7999999999999998 2.9 L4 5.1 L6.2 2.9" stroke="#c8c8c8" stroke-width="1.1" fill="none" stroke-linecap="round" stroke-linejoin="round"/></svg>
<div class="r" style="left:190.00px;top:2.00px;width:14.00px;height:12.00px;background:#4a4a4a;border-radius:3px;"></div>
<svg class="r" style="left:192.50px;top:3.50px;" width="9" height="9" viewBox="0 0 9 9"><rect x="0.6" y="2.6" width="6" height="5.8" fill="none" stroke="#dcdcdc" stroke-width="0.9"/><path d="M6.5 0V4M4.5 2H8.5" stroke="#dcdcdc" stroke-width="0.9"/></svg>
</div>
<div class="r" style="left:992px;top:244px;width:206px;height:476.5px;background:#303030;border-radius:4px;overflow:hidden">
<div class="r" style="left:0.00px;top:16.00px;width:19.00px;height:461.00px;background:#1c1c1c;border-radius:0px;"></div>
<svg class="r" style="left:7.00px;top:3.50px;" width="11" height="9" viewBox="0 0 11 9"><g fill="#dcdcdc"><rect x="0.5" y="0.5" width="10" height="3.4" rx="1.7"/><rect x="0.5" y="5.2" width="10" height="3.4" rx="1.7"/></g><circle cx="8.6" cy="2.2" r="1" fill="#303030"/><circle cx="2.4" cy="6.9" r="1" fill="#303030"/></svg>
<svg class="r" style="left:18.00px;top:4.60px;" width="8" height="8" viewBox="0 0 8 8"><path d="M1.7999999999999998 2.9 L4 5.1 L6.2 2.9" stroke="#d0d0d0" stroke-width="1.1" fill="none" stroke-linecap="round" stroke-linejoin="round"/></svg>
<div class="r" style="left:69.00px;top:3.00px;width:72.00px;height:10.30px;background:#1d1d1d;border-radius:3px;"></div>
<svg class="r" style="left:71.00px;top:4.00px;" width="9" height="9" viewBox="0 0 9 9"><circle cx="3.6" cy="3.6" r="2.7" fill="none" stroke="#d0d0d0" stroke-width="1"/><path d="M5.6 5.6 L8.3 8.3" stroke="#d0d0d0" stroke-width="1.2" stroke-linecap="round"/></svg>
<div class="t" style="left:84.40px;top:2.29px;font-size:7.07px;color:#6e6e6e;">Search</div>
<div class="r" style="left:190.00px;top:3.00px;width:11.40px;height:10.30px;background:#1f1f1f;border-radius:2.5px;"></div>
<svg class="r" style="left:191.70px;top:4.60px;" width="8" height="8" viewBox="0 0 8 8"><path d="M1.7999999999999998 2.9 L4 5.1 L6.2 2.9" stroke="#d0d0d0" stroke-width="1.1" fill="none" stroke-linecap="round" stroke-linejoin="round"/></svg>
<div class="r" style="left:0.00px;top:19.00px;width:19.00px;height:22.00px;background:#1c1c1c;border-radius:0px;"></div>
<div class="r" style="left:1.00px;top:176.50px;width:18.00px;height:18.00px;background:#303030;border-radius:3px;border-top-right-radius:0;border-bottom-right-radius:0"></div>
<svg class="r" style="left:4.50px;top:24.50px;" width="11" height="11" viewBox="0 0 11 11"><path d="M2.6 1 V5 M2.6 5 L1.4 7 V10 H3.8 V7Z" stroke="#d4d4d4" stroke-width="1" fill="#d4d4d4"/><path d="M7 1 V3.6 H9.4 V1 M8.2 3.6 V10" stroke="#d4d4d4" stroke-width="1.1" fill="none"/></svg>
<svg class="r" style="left:4.50px;top:46.50px;" width="11" height="11" viewBox="0 0 11 11"><path d="M1 3.5 H3 L3.8 2.3 H6.4 L7.2 3.5 H10 V9.5 H1Z" fill="#d4d4d4"/><rect x="3" y="5" width="3" height="2.6" fill="#1c1c1c"/><rect x="7" y="4.6" width="2" height="1.2" fill="#1c1c1c"/></svg>
<svg class="r" style="left:4.50px;top:64.50px;" width="11" height="11" viewBox="0 0 11 11"><rect x="1" y="1.5" width="9" height="3.4" rx="0.8" fill="#d4d4d4"/><rect x="2.6" y="5.2" width="5.8" height="4.6" fill="#d4d4d4"/><path d="M3.8 8.8 L5.5 6.6 L7.2 8.8Z" fill="#1c1c1c"/></svg>
<svg class="r" style="left:4.50px;top:82.30px;" width="11" height="11" viewBox="0 0 11 11"><rect x="0.8" y="1.5" width="7" height="6" fill="none" stroke="#d4d4d4" stroke-width="0.9"/><rect x="3" y="3.2" width="7.2" height="6.6" fill="#d4d4d4"/><path d="M4 8.6 L6 5.6 L7.2 7.2 L8 6.4 L9.3 8.6Z" fill="#1c1c1c"/></svg>
<svg class="r" style="left:4.50px;top:99.90px;" width="11" height="11" viewBox="0 0 11 11"><path d="M2.6 0.8 H5.6 L7 4.2 H1.4 Z" fill="#d4d4d4"/><circle cx="3.4" cy="7" r="2.8" fill="#d4d4d4"/><circle cx="8" cy="7.8" r="2.1" fill="none" stroke="#d4d4d4" stroke-width="0.9"/></svg>
<svg class="r" style="left:4.50px;top:117.20px;" width="11" height="11" viewBox="0 0 11 11"><circle cx="5.5" cy="5.5" r="4.4" fill="none" stroke="#e0566a" stroke-width="1"/><path d="M2 3.4 Q4 5 3.4 7.4 M5 1.2 Q7.6 3 6.6 5.6 Q6 7.6 7.6 9.2 M8.2 2.2 Q9.6 4 9.6 6" fill="none" stroke="#e0566a" stroke-width="0.9"/></svg>
<svg class="r" style="left:4.50px;top:139.50px;" width="11" height="11" viewBox="0 0 11 11"><rect x="0.8" y="1.2" width="9.4" height="2.4" fill="#d4d4d4"/><path d="M1.4 4.2 H9.6 V10 H1.4Z M3.6 5.6 V6.8 H7.4 V5.6Z" fill="#d4d4d4" fill-rule="evenodd"/></svg>
<svg class="r" style="left:4.50px;top:162.50px;" width="11" height="11" viewBox="0 0 11 11"><rect x="3" y="3" width="5" height="5" fill="#e8934a"/><path d="M0.8 3V0.8H3M8 0.8H10.2V3M10.2 8V10.2H8M3 10.2H0.8V8" stroke="#e8934a" stroke-width="1" fill="none"/></svg>
<svg class="r" style="left:4.50px;top:180.10px;" width="11" height="11" viewBox="0 0 11 11"><path d="M1.6 9.4 L5.6 5.4" stroke="#5f93dc" stroke-width="2.4" stroke-linecap="round"/><path d="M7.6 1 A3.1 3.1 0 1 0 10 3.6 L8 4.8 L6.4 3.2Z" fill="#5f93dc"/></svg>
<svg class="r" style="left:4.50px;top:197.10px;" width="11" height="11" viewBox="0 0 11 11"><g fill="#5f93dc"><circle cx="2" cy="2.2" r="1.2"/><circle cx="5.2" cy="4.6" r="1.2"/><circle cx="9" cy="6.4" r="1.2"/><circle cx="4.2" cy="9" r="1.2"/></g><path d="M2 2.2 L5.2 4.6 L9 6.4 M5.2 4.6 L4.2 9" stroke="#5f93dc" stroke-width="0.7" fill="none"/></svg>
<svg class="r" style="left:4.50px;top:214.80px;" width="11" height="11" viewBox="0 0 11 11"><circle cx="5.5" cy="5.5" r="4.2" fill="none" stroke="#5f93dc" stroke-width="1"/><circle cx="5.5" cy="5.5" r="1.9" fill="#5f93dc"/><circle cx="8.7" cy="2.4" r="1.1" fill="#5f93dc"/></svg>
<svg class="r" style="left:4.50px;top:232.50px;" width="11" height="11" viewBox="0 0 11 11"><g fill="none" stroke="#5f93dc" stroke-width="1.1"><ellipse cx="4" cy="6.8" rx="2.8" ry="2.2" transform="rotate(-40 4 6.8)"/><ellipse cx="7" cy="4.2" rx="2.8" ry="2.2" transform="rotate(-40 7 4.2)"/></g></svg>
<svg class="r" style="left:4.50px;top:249.50px;" width="11" height="11" viewBox="0 0 11 11"><g><path d="M2 2.4 H9 L5.5 9Z" fill="none" stroke="#35b58a" stroke-width="0.9"/><circle cx="2" cy="2.4" r="1.3" fill="#35b58a"/><circle cx="9" cy="2.4" r="1.3" fill="#35b58a"/><circle cx="5.5" cy="9" r="1.3" fill="#35b58a"/></g></svg>
<svg class="r" style="left:4.50px;top:267.50px;" width="11" height="11" viewBox="0 0 11 11"><circle cx="5.5" cy="5.5" r="4.4" fill="#d95a62"/><path d="M5.5 1.1 A4.4 4.4 0 0 1 9.9 5.5 H5.5Z" fill="#f3c4c6"/><path d="M1.1 5.5 H5.5 V9.9 A4.4 4.4 0 0 1 1.1 5.5Z" fill="#f3c4c6" opacity="0.55"/></svg>
<svg class="r" style="left:6.30px;top:288.80px;" width="8" height="8" viewBox="0 0 8 8"><path d="M1.7999999999999998 2.9 L4 5.1 L6.2 2.9" stroke="#6a6a6a" stroke-width="1.1" fill="none" stroke-linecap="round" stroke-linejoin="round"/></svg>
<svg class="r" style="left:25.20px;top:23.50px;" width="9" height="9" viewBox="0 0 9 9"><rect x="2.2" y="2.2" width="4.6" height="4.6" fill="#e6e6e6"/><path d="M0.6 2.5V0.6H2.5M6.5 0.6H8.4V2.5M8.4 6.5V8.4H6.5M2.5 8.4H0.6V6.5" stroke="#e6e6e6" stroke-width="0.9" fill="none"/></svg>
<div class="t" style="left:40.00px;top:22.58px;font-size:7.33px;color:#e3e3e3;">long sleeve button up s...</div>
<svg class="r" style="left:126.60px;top:24.30px;" width="8" height="8" viewBox="0 0 8 8"><path d="M2.9 1.7999999999999998 L5.1 4 L2.9 6.2" stroke="#d0d0d0" stroke-width="1.1" fill="none" stroke-linecap="round" stroke-linejoin="round"/></svg>
<svg class="r" style="left:137.60px;top:23.00px;" width="10" height="10" viewBox="0 0 10 10"><g fill="none" stroke="#d8d8d8" stroke-width="0.9"><path d="M1 3.2 H6.8 V9 H1Z"/><path d="M3 3 V1 H9 V7 H7"/></g></svg>
<div class="t" style="left:153.00px;top:22.57px;font-size:7.51px;color:#e3e3e3;">Solidify</div>
<svg class="r" style="left:190.50px;top:23.00px;" width="10" height="10" viewBox="0 0 10 10"><path d="M5.5 1 L9 4.5 L7.5 5 L6 6.5 L6 8 L2 4 L3.5 4 L5 2.5 Z M3.8 6.2 L1 9" fill="none" stroke="#9a9a9a" stroke-width="0.9" stroke-linejoin="round"/></svg>
<div class="r" style="left:23.80px;top:45.40px;width:87.80px;height:10.90px;background:#545454;border-radius:0px;border-top-left-radius:3px"></div>
<div class="r" style="left:112.40px;top:45.40px;width:89.00px;height:10.90px;background:#545454;border-radius:0px;border-top-right-radius:3px"></div>
<div class="r" style="left:23.80px;top:57.10px;width:87.80px;height:11.40px;background:#545454;border-radius:0px;border-bottom-left-radius:3px"></div>
<div class="r" style="left:112.40px;top:57.10px;width:89.00px;height:11.40px;background:#545454;border-radius:0px;border-bottom-right-radius:3px"></div>
<div class="t" style="left:58.81px;top:45.48px;font-size:7.45px;color:#e3e3e3;">Apply All</div>
<div class="t" style="left:146.06px;top:45.48px;font-size:7.45px;color:#e3e3e3;">Delete All</div>
<div class="t" style="left:53.03px;top:57.38px;font-size:7.45px;color:#e3e3e3;">Viewport Vis</div>
<div class="t" style="left:140.47px;top:57.38px;font-size:7.45px;color:#e3e3e3;">Toggle Stack</div>
<svg class="r" style="left:27.00px;top:46.50px;" width="9" height="9" viewBox="0 0 9 9"><path d="M4.5 0.5 V5.4 M2.4 3.6 L4.5 5.8 L6.6 3.6" fill="none" stroke="#dcdcdc" stroke-width="0.9"/><path d="M0.8 5.6 V8 H8.2 V5.6" fill="none" stroke="#dcdcdc" stroke-width="0.9"/></svg>
<svg class="r" style="left:116.00px;top:47.50px;" width="7" height="7" viewBox="0 0 7 7"><path d="M1 1L6 6M6 1L1 6" stroke="#dcdcdc" stroke-width="0.9"/></svg>
<svg class="r" style="left:27.00px;top:58.30px;" width="9" height="9" viewBox="0 0 9 9"><rect x="0.6" y="1" width="7.8" height="5.4" rx="0.8" fill="#dcdcdc"/><rect x="1.8" y="2.1" width="5.4" height="3.2" fill="#8a8a8a"/><path d="M2.6 8 H6.4 M4.5 6.4 V8" stroke="#dcdcdc" stroke-width="0.9"/></svg>
<svg class="r" style="left:115.00px;top:58.30px;" width="9" height="9" viewBox="0 0 9 9"><path d="M0.6 3.2 V0.6 H3.2 M5.8 8.4 H8.4 V5.8 M0.8 8.2 L3.4 5.6 M8.2 0.8 L5.6 3.4 M5.4 0.6 H8.4 V3.6 M0.6 5.4 V8.4 H3.6" fill="none" stroke="#dcdcdc" stroke-width="0.8"/></svg>
<div class="r" style="left:23.80px;top:73.00px;width:177.60px;height:11.30px;background:#545454;border-radius:3px;"></div>
<svg class="r" style="left:27.70px;top:75.20px;" width="7" height="7" viewBox="0 0 7 7"><path d="M3.5 0.5V6.5M0.5 3.5H6.5" stroke="#dcdcdc" stroke-width="0.9"/></svg>
<div class="t" style="left:96.59px;top:73.08px;font-size:7.45px;color:#e3e3e3;">Add Modifier</div>
<div class="r" style="left:24.30px;top:91.30px;width:177.20px;height:141.00px;background:#3d3d3d;border-radius:3px;"></div>
<svg class="r" style="left:27.70px;top:95.70px;" width="8" height="8" viewBox="0 0 8 8"><path d="M1.7999999999999998 2.9 L4 5.1 L6.2 2.9" stroke="#d0d0d0" stroke-width="1.1" fill="none" stroke-linecap="round" stroke-linejoin="round"/></svg>
<svg class="r" style="left:37.00px;top:94.40px;" width="10" height="10" viewBox="0 0 10 10"><g fill="none" stroke="#d8d8d8" stroke-width="0.8"><path d="M4 2 L1 1.2 V7 L4 8.6 M4 4 L2.6 5.4"/><path d="M6 2 L9 1.2 V7 L6 8.6 M6 4 L7.4 5.4"/><path d="M5 0.4 V9.6" stroke-dasharray="1 0.8"/></g></svg>
<div class="r" style="left:54.30px;top:93.90px;width:53.20px;height:11.00px;background:#1d1d1d;border-radius:3px;border-top-right-radius:0;border-bottom-right-radius:0"></div>
<div class="t" style="left:58.60px;top:93.98px;font-size:7.45px;color:#e3e3e3;">Mirror</div>
<div class="r" style="left:108.20px;top:93.90px;width:12.40px;height:11.00px;background:#2a2a2a;border-radius:0px;"></div>
<svg class="r" style="left:109.80px;top:94.90px;" width="9" height="9" viewBox="0 0 9 9"><path d="M1.4 1.6 H7.6 L4.5 7.6Z" fill="none" stroke="#e0e0e0" stroke-width="0.85"/><circle cx="1.4" cy="1.6" r="1.1" fill="#e0e0e0"/><circle cx="7.6" cy="1.6" r="1.1" fill="#e0e0e0"/><circle cx="4.5" cy="7.6" r="1.1" fill="#e0e0e0"/></svg>
<div class="r" style="left:121.20px;top:93.90px;width:36.40px;height:11.00px;background:#4772b3;border-radius:0px;border-top-right-radius:3px;border-bottom-right-radius:3px"></div>
<div class="r" style="left:133.00px;top:93.90px;width:0.70px;height:11.00px;background:#3a5e94;border-radius:0px;"></div>
<div class="r" style="left:145.30px;top:93.90px;width:0.70px;height:11.00px;background:#3a5e94;border-radius:0px;"></div>
<svg class="r" style="left:122.60px;top:94.90px;" width="9" height="9" viewBox="0 0 9 9"><rect x="1.6" y="1.6" width="5.8" height="5.8" fill="none" stroke="#fff" stroke-width="0.85"/><rect x="0.4" y="0.4" width="2.4" height="2.4" fill="#fff"/><rect x="6.2" y="0.4" width="2.4" height="2.4" fill="#fff"/><rect x="0.4" y="6.2" width="2.4" height="2.4" fill="#fff"/><rect x="6.2" y="6.2" width="2.4" height="2.4" fill="#fff"/></svg>
<svg class="r" style="left:135.00px;top:94.90px;" width="9" height="9" viewBox="0 0 9 9"><rect x="0.6" y="1" width="7.8" height="5.4" rx="0.8" fill="#fff"/><rect x="1.8" y="2.1" width="5.4" height="3.2" fill="#8fa9d0"/><path d="M2.6 8 H6.4 M4.5 6.4 V8" stroke="#fff" stroke-width="0.9"/></svg>
<svg class="r" style="left:147.30px;top:94.90px;" width="9" height="9" viewBox="0 0 9 9"><path d="M0.4 2.4 H2.5 L3.2 1.2 H5.8 L6.5 2.4 H8.6 V7.6 H0.4Z" fill="#fff"/><circle cx="4.5" cy="4.9" r="1.8" fill="#4772b3"/><circle cx="4.5" cy="4.9" r="0.7" fill="#fff"/></svg>
<div class="r" style="left:158.30px;top:93.90px;width:11.10px;height:11.00px;background:#232323;border-radius:3px;"></div>
<svg class="r" style="left:160.00px;top:95.70px;" width="8" height="8" viewBox="0 0 8 8"><path d="M1.7999999999999998 2.9 L4 5.1 L6.2 2.9" stroke="#d0d0d0" stroke-width="1.1" fill="none" stroke-linecap="round" stroke-linejoin="round"/></svg>
<svg class="r" style="left:173.20px;top:96.00px;" width="7" height="7" viewBox="0 0 7 7"><path d="M1 1L6 6M6 1L1 6" stroke="#dcdcdc" stroke-width="0.9"/></svg>
<svg class="r" style="left:189.00px;top:97.90px;" width="8" height="4" viewBox="0 0 8 4"><rect x="0" y="0" width="1" height="1" fill="#5a5a5a"/><rect x="0" y="2" width="1" height="1" fill="#5a5a5a"/><rect x="2" y="0" width="1" height="1" fill="#5a5a5a"/><rect x="2" y="2" width="1" height="1" fill="#5a5a5a"/><rect x="4" y="0" width="1" height="1" fill="#5a5a5a"/><rect x="4" y="2" width="1" height="1" fill="#5a5a5a"/><rect x="6" y="0" width="1" height="1" fill="#5a5a5a"/><rect x="6" y="2" width="1" height="1" fill="#5a5a5a"/></svg>
<div class="t" style="left:73.33px;top:112.48px;font-size:7.45px;color:#e3e3e3;">Axis</div>
<div class="r" style="left:94.2px;top:112.5px;width:28.7px;height:11.2px;background:#4772b3;border-radius:3px 0 0 3px"></div>
<div class="t" style="left:106.07px;top:112.68px;font-size:7.45px;color:#ffffff;">X</div>
<div class="r" style="left:123.6px;top:112.5px;width:29.0px;height:11.2px;background:#545454;border-radius:0"></div>
<div class="t" style="left:135.62px;top:112.68px;font-size:7.45px;color:#e3e3e3;">Y</div>
<div class="r" style="left:153.3px;top:112.5px;width:30.1px;height:11.2px;background:#545454;border-radius:0 3px 3px 0"></div>
<div class="t" style="left:166.07px;top:112.68px;font-size:7.45px;color:#e3e3e3;">Z</div>
<div class="t" style="left:67.11px;top:126.28px;font-size:7.45px;color:#e3e3e3;">Bisect</div>
<div class="r" style="left:94.2px;top:126.3px;width:28.7px;height:11.2px;background:#545454;border-radius:3px 0 0 3px"></div>
<div class="t" style="left:106.07px;top:126.48px;font-size:7.45px;color:#e3e3e3;">X</div>
<div class="r" style="left:123.6px;top:126.3px;width:29.0px;height:11.2px;background:#545454;border-radius:0"></div>
<div class="t" style="left:135.62px;top:126.48px;font-size:7.45px;color:#e3e3e3;">Y</div>
<div class="r" style="left:153.3px;top:126.3px;width:30.1px;height:11.2px;background:#545454;border-radius:0 3px 3px 0"></div>
<div class="t" style="left:166.07px;top:126.48px;font-size:7.45px;color:#e3e3e3;">Z</div>
<div class="t" style="left:75.40px;top:140.08px;font-size:7.45px;color:#7a7a7a;">Flip</div>
<div class="r" style="left:94.2px;top:140.1px;width:28.7px;height:11.2px;background:#444444;border-radius:3px 0 0 3px"></div>
<div class="t" style="left:106.07px;top:140.28px;font-size:7.45px;color:#7a7a7a;">X</div>
<div class="r" style="left:123.6px;top:140.1px;width:29.0px;height:11.2px;background:#444444;border-radius:0"></div>
<div class="t" style="left:135.62px;top:140.28px;font-size:7.45px;color:#7a7a7a;">Y</div>
<div class="r" style="left:153.3px;top:140.1px;width:30.1px;height:11.2px;background:#444444;border-radius:0 3px 3px 0"></div>
<div class="t" style="left:166.07px;top:140.28px;font-size:7.45px;color:#7a7a7a;">Z</div>
<div class="t" style="left:44.35px;top:158.98px;font-size:7.45px;color:#e3e3e3;">Mirror Object</div>
<div class="r" style="left:94.20px;top:159.30px;width:89.20px;height:10.30px;background:#1d1d1d;border-radius:3px;"></div>
<svg class="r" style="left:96.20px;top:160.00px;" width="9" height="9" viewBox="0 0 9 9"><rect x="2.2" y="2.2" width="4.6" height="4.6" fill="#e6e6e6"/><path d="M0.6 2.5V0.6H2.5M6.5 0.6H8.4V2.5M8.4 6.5V8.4H6.5M2.5 8.4H0.6V6.5" stroke="#e6e6e6" stroke-width="0.9" fill="none"/></svg>
<div class="t" style="left:110.00px;top:158.98px;font-size:7.45px;color:#6e6e6e;">Object</div>
<svg class="r" style="left:172.00px;top:160.00px;" width="9" height="9" viewBox="0 0 9 9"><path d="M1 8 L1.6 6.2 L5.4 2.4 L6.6 3.6 L2.8 7.4Z" fill="none" stroke="#dcdcdc" stroke-width="0.8"/><path d="M5 1.6 L7.4 4 M6.2 2.8 L7.6 1.4" stroke="#dcdcdc" stroke-width="1.5" stroke-linecap="round"/></svg>
<div class="r" style="left:94.00px;top:174.00px;width:7.80px;height:7.80px;background:#545454;border-radius:1.5px;"></div>
<div class="t" style="left:104.20px;top:172.48px;font-size:7.45px;color:#e3e3e3;">Clipping</div>
<svg class="r" style="left:189.40px;top:176.60px;" width="3" height="3" viewBox="0 0 3 3"><circle cx="1.4" cy="1.4" r="1.15" fill="#d8d8d8"/></svg>
<div class="t" style="left:66.29px;top:186.28px;font-size:7.45px;color:#e3e3e3;">Merge</div>
<div class="r" style="left:94.00px;top:187.80px;width:7.80px;height:7.80px;background:#4772b3;border-radius:1.5px;"></div>
<svg class="r" style="left:94.00px;top:187.80px;" width="8" height="8" viewBox="0 0 8 8"><path d="M1.7 3.9 L3.3 5.6 L6.2 2" fill="none" stroke="#fff" stroke-width="1.1"/></svg>
<div class="r" style="left:106.60px;top:186.60px;width:76.80px;height:10.20px;background:#545454;border-radius:3px;"></div>
<div class="t" style="left:131.14px;top:186.28px;font-size:7.45px;color:#e3e3e3;">0.001 m</div>
<svg class="r" style="left:189.40px;top:190.40px;" width="3" height="3" viewBox="0 0 3 3"><circle cx="1.4" cy="1.4" r="1.15" fill="#d8d8d8"/></svg>
<div class="t" style="left:36.06px;top:200.08px;font-size:7.45px;color:#7a7a7a;">Bisect Distance</div>
<div class="r" style="left:94.20px;top:200.40px;width:89.20px;height:10.20px;background:#444444;border-radius:3px;"></div>
<div class="t" style="left:124.34px;top:200.08px;font-size:7.45px;color:#7a7a7a;">0.001 m</div>
<svg class="r" style="left:189.40px;top:204.20px;" width="3" height="3" viewBox="0 0 3 3"><circle cx="1.4" cy="1.4" r="1.15" fill="#5a5a5a"/></svg>
<svg class="r" style="left:36.20px;top:221.00px;" width="8" height="8" viewBox="0 0 8 8"><path d="M2.9 1.7999999999999998 L5.1 4 L2.9 6.2" stroke="#d0d0d0" stroke-width="1.1" fill="none" stroke-linecap="round" stroke-linejoin="round"/></svg>
<div class="t" style="left:46.20px;top:219.48px;font-size:7.45px;color:#e3e3e3;">Data</div>
<div class="r" style="left:24.30px;top:234.20px;width:177.60px;height:229.40px;background:#3d3d3d;border-radius:4px;border:0.9px solid #3f6299"></div>
<svg class="r" style="left:27.70px;top:238.20px;" width="8" height="8" viewBox="0 0 8 8"><path d="M1.7999999999999998 2.9 L4 5.1 L6.2 2.9" stroke="#d0d0d0" stroke-width="1.1" fill="none" stroke-linecap="round" stroke-linejoin="round"/></svg>
<svg class="r" style="left:37.00px;top:236.90px;" width="10" height="10" viewBox="0 0 10 10"><g fill="none" stroke="#d8d8d8" stroke-width="0.9"><path d="M1 3.2 H6.8 V9 H1Z"/><path d="M3 3 V1 H9 V7 H7"/></g></svg>
<div class="r" style="left:54.30px;top:236.40px;width:53.20px;height:11.00px;background:#1d1d1d;border-radius:3px;border-top-right-radius:0;border-bottom-right-radius:0"></div>
<div class="t" style="left:58.60px;top:236.48px;font-size:7.45px;color:#e3e3e3;">Solidify</div>
<div class="r" style="left:108.20px;top:236.40px;width:12.40px;height:11.00px;background:#2a2a2a;border-radius:0px;"></div>
<svg class="r" style="left:109.80px;top:237.40px;" width="9" height="9" viewBox="0 0 9 9"><path d="M1.4 1.6 H7.6 L4.5 7.6Z" fill="none" stroke="#e0e0e0" stroke-width="0.85"/><circle cx="1.4" cy="1.6" r="1.1" fill="#e0e0e0"/><circle cx="7.6" cy="1.6" r="1.1" fill="#e0e0e0"/><circle cx="4.5" cy="7.6" r="1.1" fill="#e0e0e0"/></svg>
<div class="r" style="left:121.20px;top:236.40px;width:36.40px;height:11.00px;background:#4772b3;border-radius:0px;border-top-right-radius:3px;border-bottom-right-radius:3px"></div>
<div class="r" style="left:133.00px;top:236.40px;width:0.70px;height:11.00px;background:#3a5e94;border-radius:0px;"></div>
<div class="r" style="left:145.30px;top:236.40px;width:0.70px;height:11.00px;background:#3a5e94;border-radius:0px;"></div>
<svg class="r" style="left:122.60px;top:237.40px;" width="9" height="9" viewBox="0 0 9 9"><rect x="1.6" y="1.6" width="5.8" height="5.8" fill="none" stroke="#fff" stroke-width="0.85"/><rect x="0.4" y="0.4" width="2.4" height="2.4" fill="#fff"/><rect x="6.2" y="0.4" width="2.4" height="2.4" fill="#fff"/><rect x="0.4" y="6.2" width="2.4" height="2.4" fill="#fff"/><rect x="6.2" y="6.2" width="2.4" height="2.4" fill="#fff"/></svg>
<svg class="r" style="left:135.00px;top:237.40px;" width="9" height="9" viewBox="0 0 9 9"><rect x="0.6" y="1" width="7.8" height="5.4" rx="0.8" fill="#fff"/><rect x="1.8" y="2.1" width="5.4" height="3.2" fill="#8fa9d0"/><path d="M2.6 8 H6.4 M4.5 6.4 V8" stroke="#fff" stroke-width="0.9"/></svg>
<svg class="r" style="left:147.30px;top:237.40px;" width="9" height="9" viewBox="0 0 9 9"><path d="M0.4 2.4 H2.5 L3.2 1.2 H5.8 L6.5 2.4 H8.6 V7.6 H0.4Z" fill="#fff"/><circle cx="4.5" cy="4.9" r="1.8" fill="#4772b3"/><circle cx="4.5" cy="4.9" r="0.7" fill="#fff"/></svg>
<div class="r" style="left:158.30px;top:236.40px;width:11.10px;height:11.00px;background:#232323;border-radius:3px;"></div>
<svg class="r" style="left:160.00px;top:238.20px;" width="8" height="8" viewBox="0 0 8 8"><path d="M1.7999999999999998 2.9 L4 5.1 L6.2 2.9" stroke="#d0d0d0" stroke-width="1.1" fill="none" stroke-linecap="round" stroke-linejoin="round"/></svg>
<svg class="r" style="left:173.20px;top:238.50px;" width="7" height="7" viewBox="0 0 7 7"><path d="M1 1L6 6M6 1L1 6" stroke="#dcdcdc" stroke-width="0.9"/></svg>
<svg class="r" style="left:189.00px;top:240.40px;" width="8" height="4" viewBox="0 0 8 4"><rect x="0" y="0" width="1" height="1" fill="#5a5a5a"/><rect x="0" y="2" width="1" height="1" fill="#5a5a5a"/><rect x="2" y="0" width="1" height="1" fill="#5a5a5a"/><rect x="2" y="2" width="1" height="1" fill="#5a5a5a"/><rect x="4" y="0" width="1" height="1" fill="#5a5a5a"/><rect x="4" y="2" width="1" height="1" fill="#5a5a5a"/><rect x="6" y="0" width="1" height="1" fill="#5a5a5a"/><rect x="6" y="2" width="1" height="1" fill="#5a5a5a"/></svg>
<div class="t" style="left:68.77px;top:255.28px;font-size:7.45px;color:#e3e3e3;">Mode</div>
<div class="r" style="left:94.20px;top:255.60px;width:89.60px;height:10.30px;background:#282828;border-radius:3px;"></div>
<div class="t" style="left:98.50px;top:255.28px;font-size:7.45px;color:#e3e3e3;">Simple</div>
<svg class="r" style="left:175.30px;top:257.00px;" width="8" height="8" viewBox="0 0 8 8"><path d="M1.7999999999999998 2.9 L4 5.1 L6.2 2.9" stroke="#d0d0d0" stroke-width="1.1" fill="none" stroke-linecap="round" stroke-linejoin="round"/></svg>
<svg class="r" style="left:189.40px;top:259.40px;" width="3" height="3" viewBox="0 0 3 3"><circle cx="1.4" cy="1.4" r="1.15" fill="#d8d8d8"/></svg>
<div class="t" style="left:53.87px;top:270.78px;font-size:7.45px;color:#e3e3e3;">Thickness</div>
<div class="r" style="left:94.20px;top:271.10px;width:89.60px;height:10.30px;background:#545454;border-radius:3px;"></div>
<div class="t" style="left:124.54px;top:270.78px;font-size:7.45px;color:#e3e3e3;">0.001 m</div>
<svg class="r" style="left:189.40px;top:274.90px;" width="3" height="3" viewBox="0 0 3 3"><circle cx="1.4" cy="1.4" r="1.15" fill="#d8d8d8"/></svg>
<div class="t" style="left:67.66px;top:286.38px;font-size:7.45px;color:#e3e3e3;">Offset</div>
<div class="r" style="left:94.20px;top:286.70px;width:89.60px;height:10.30px;background:#545454;border-radius:3px;"></div>
<div class="t" style="left:125.37px;top:286.38px;font-size:7.45px;color:#e3e3e3;">-1.0000</div>
<svg class="r" style="left:189.40px;top:290.50px;" width="3" height="3" viewBox="0 0 3 3"><circle cx="1.4" cy="1.4" r="1.15" fill="#d8d8d8"/></svg>
<div class="r" style="left:94.00px;top:303.40px;width:7.80px;height:7.80px;background:#545454;border-radius:1.5px;"></div>
<div class="t" style="left:104.30px;top:301.88px;font-size:7.45px;color:#e3e3e3;">Even Thickness</div>
<svg class="r" style="left:189.40px;top:306.00px;" width="3" height="3" viewBox="0 0 3 3"><circle cx="1.4" cy="1.4" r="1.15" fill="#d8d8d8"/></svg>
<div class="t" style="left:74.16px;top:317.38px;font-size:7.45px;color:#e3e3e3;">Rim</div>
<div class="r" style="left:94.00px;top:318.90px;width:7.80px;height:7.80px;background:#4772b3;border-radius:1.5px;"></div>
<svg class="r" style="left:94.00px;top:318.90px;" width="8" height="8" viewBox="0 0 8 8"><path d="M1.7 3.9 L3.3 5.6 L6.2 2" fill="none" stroke="#fff" stroke-width="1.1"/></svg>
<div class="t" style="left:104.30px;top:317.38px;font-size:7.45px;color:#e3e3e3;">Fill</div>
<svg class="r" style="left:189.40px;top:321.50px;" width="3" height="3" viewBox="0 0 3 3"><circle cx="1.4" cy="1.4" r="1.15" fill="#d8d8d8"/></svg>
<div class="r" style="left:94.00px;top:333.00px;width:7.80px;height:7.80px;background:#545454;border-radius:1.5px;"></div>
<div class="t" style="left:104.30px;top:331.48px;font-size:7.45px;color:#e3e3e3;">Only Rim</div>
<svg class="r" style="left:189.40px;top:335.60px;" width="3" height="3" viewBox="0 0 3 3"><circle cx="1.4" cy="1.4" r="1.15" fill="#d8d8d8"/></svg>
<div class="t" style="left:43.51px;top:353.88px;font-size:7.45px;color:#e3e3e3;">Vertex Group</div>
<div class="r" style="left:94.20px;top:354.20px;width:77.00px;height:10.30px;background:#1d1d1d;border-radius:3px;border-top-right-radius:0;border-bottom-right-radius:0"></div>
<svg class="r" style="left:96.00px;top:355.00px;" width="9" height="9" viewBox="0 0 9 9"><g fill="#e0e0e0"><rect x="0.5" y="3.4" width="2" height="2.2"/><rect x="3.4" y="0.6" width="2.2" height="2.2"/><rect x="3.4" y="3.4" width="2.2" height="2.2"/><rect x="3.4" y="6.2" width="2.2" height="2.2"/><rect x="6.4" y="2" width="2" height="2"/><rect x="6.4" y="5" width="2" height="2"/></g></svg>
<div class="r" style="left:171.80px;top:354.20px;width:12.00px;height:10.30px;background:#444444;border-radius:3px;border-top-left-radius:0;border-bottom-left-radius:0"></div>
<svg class="r" style="left:173.30px;top:356.00px;" width="9" height="7" viewBox="0 0 9 7"><path d="M1 3.5 H8 M2.6 1.8 L1 3.5 L2.6 5.2 M6.4 1.8 L8 3.5 L6.4 5.2" fill="none" stroke="#6a6a6a" stroke-width="0.8"/></svg>
<div class="t" style="left:66.29px;top:369.48px;font-size:7.45px;color:#7a7a7a;">Factor</div>
<div class="r" style="left:94.20px;top:369.80px;width:89.60px;height:10.30px;background:#444444;border-radius:3px;"></div>
<div class="t" style="left:128.68px;top:369.48px;font-size:7.45px;color:#7a7a7a;">0.000</div>
<svg class="r" style="left:189.40px;top:373.60px;" width="3" height="3" viewBox="0 0 3 3"><circle cx="1.4" cy="1.4" r="1.15" fill="#5a5a5a"/></svg>
<svg class="r" style="left:36.30px;top:390.60px;" width="8" height="8" viewBox="0 0 8 8"><path d="M2.9 1.7999999999999998 L5.1 4 L2.9 6.2" stroke="#d0d0d0" stroke-width="1.1" fill="none" stroke-linecap="round" stroke-linejoin="round"/></svg>
<div class="t" style="left:46.10px;top:388.98px;font-size:7.45px;color:#e3e3e3;">Normals</div>
<svg class="r" style="left:36.30px;top:406.10px;" width="8" height="8" viewBox="0 0 8 8"><path d="M2.9 1.7999999999999998 L5.1 4 L2.9 6.2" stroke="#d0d0d0" stroke-width="1.1" fill="none" stroke-linecap="round" stroke-linejoin="round"/></svg>
<div class="t" style="left:46.10px;top:404.48px;font-size:7.45px;color:#e3e3e3;">Materials</div>
<svg class="r" style="left:36.30px;top:421.70px;" width="8" height="8" viewBox="0 0 8 8"><path d="M2.9 1.7999999999999998 L5.1 4 L2.9 6.2" stroke="#d0d0d0" stroke-width="1.1" fill="none" stroke-linecap="round" stroke-linejoin="round"/></svg>
<div class="t" style="left:46.10px;top:420.08px;font-size:7.45px;color:#e3e3e3;">Edge Data</div>
<svg class="r" style="left:36.30px;top:437.20px;" width="8" height="8" viewBox="0 0 8 8"><path d="M2.9 1.7999999999999998 L5.1 4 L2.9 6.2" stroke="#d0d0d0" stroke-width="1.1" fill="none" stroke-linecap="round" stroke-linejoin="round"/></svg>
<div class="t" style="left:46.10px;top:435.58px;font-size:7.45px;color:#e3e3e3;">Thickness Clamp</div>
<svg class="r" style="left:36.30px;top:452.70px;" width="8" height="8" viewBox="0 0 8 8"><path d="M2.9 1.7999999999999998 L5.1 4 L2.9 6.2" stroke="#d0d0d0" stroke-width="1.1" fill="none" stroke-linecap="round" stroke-linejoin="round"/></svg>
<div class="t" style="left:46.10px;top:451.08px;font-size:7.45px;color:#e3e3e3;">Output Vertex Groups</div>
<svg class="r" style="left:148.00px;top:401.00px;" width="44" height="80" viewBox="0 0 44 80"><defs><linearGradient id="fire" x1="0" y1="0" x2="0" y2="1"><stop offset="0" stop-color="#d9b848"/><stop offset="0.55" stop-color="#d98a38"/><stop offset="1" stop-color="#c9402e"/></linearGradient></defs>
<g fill="none" stroke="#2d2f8c" stroke-width="2.3" stroke-linecap="round" opacity="0.9">
<path d="M23.2 6.6 V35.4 L21.6 36.8"/><path d="M12.4 10 L14 12"/><path d="M8 18 H17.5 Q15 28 7.6 36"/><path d="M35.5 13 Q30 18 26 24 Q30 30 37.6 34.7"/></g>
<g fill="none" stroke="url(#fire)" stroke-width="2.3" stroke-linecap="round" opacity="0.9">
<path d="M21 43.4 Q22.5 58 7.4 72.9"/><path d="M23.2 57 Q28 66 35.5 72.2"/><path d="M12.4 52.7 L10.3 60"/><path d="M33.3 51.3 L27.6 56.3"/></g></svg>
</div>
<div class="r" style="left:1.6px;top:669px;width:988.8px;height:52.799999999999955px;background:#1f1f1f;border-radius:4px;overflow:hidden">
<div class="r" style="left:-0.60px;top:0.00px;width:990.00px;height:16.20px;background:#303030;border-radius:0px;"></div>
<svg class="r" style="left:6.90px;top:3.40px;" width="11" height="11" viewBox="0 0 11 11"><circle cx="5.5" cy="5.5" r="4.6" fill="#dcdcdc"/><path d="M5.5 5.5 V2 M5.5 5.5 L8 7" stroke="#303030" stroke-width="1.2" fill="none"/></svg>
<svg class="r" style="left:16.40px;top:5.00px;" width="8" height="8" viewBox="0 0 8 8"><path d="M1.7999999999999998 2.9 L4 5.1 L6.2 2.9" stroke="#d0d0d0" stroke-width="1.1" fill="none" stroke-linecap="round" stroke-linejoin="round"/></svg>
<div class="t" style="left:31.40px;top:2.76px;font-size:7.91px;color:#e3e3e3;">View</div>
<div class="t" style="left:57.90px;top:2.78px;font-size:7.23px;color:#e3e3e3;">Marker</div>
<div class="r" style="left:89.90px;top:3.10px;width:44.50px;height:11.30px;background:#2b2b2b;border-radius:3px;"></div>
<div class="t" style="left:94.90px;top:2.78px;font-size:7.27px;color:#e3e3e3;">Playback</div>
<svg class="r" style="left:125.90px;top:5.00px;" width="8" height="8" viewBox="0 0 8 8"><path d="M1.7999999999999998 2.9 L4 5.1 L6.2 2.9" stroke="#d0d0d0" stroke-width="1.1" fill="none" stroke-linecap="round" stroke-linejoin="round"/></svg>
<div class="r" style="left:402.40px;top:3.10px;width:12.00px;height:11.30px;background:#545454;border-radius:3px;"></div>
<svg class="r" style="left:404.40px;top:4.80px;" width="8" height="8" viewBox="0 0 8 8"><circle cx="4" cy="4" r="2.8" fill="none" stroke="#9a9a9a" stroke-width="0.9"/></svg>
<svg class="r" style="left:415.40px;top:5.00px;" width="8" height="8" viewBox="0 0 8 8"><path d="M1.7999999999999998 2.9 L4 5.1 L6.2 2.9" stroke="#5a5a5a" stroke-width="1.1" fill="none" stroke-linecap="round" stroke-linejoin="round"/></svg>
<div class="r" style="left:430.90px;top:3.10px;width:73.00px;height:11.30px;background:#545454;border-radius:3px;"></div>
<svg class="r" style="left:431.90px;top:4.80px;" width="72" height="8" viewBox="0 0 72 8"><g fill="#f0f0f0">
<rect x="1.5" y="0.8" width="1.2" height="6.4"/><path d="M8 0.8 L3.2 4 L8 7.2Z"/>
<path d="M13.4 4 L16.4 1.4 V6.6Z"/><path d="M19.4 1.2 L22.2 4 L19.4 6.8 L16.6 4Z"/>
<path d="M31 0.4 L25.4 4 L31 7.6Z"/>
<path d="M37.6 0.4 L43.2 4 L37.6 7.6Z"/>
<path d="M49.6 1.2 L52.4 4 L49.6 6.8 L46.8 4Z"/><path d="M55.6 4 L52.6 1.4 V6.6Z"/>
<path d="M61 0.8 L65.8 4 L61 7.2Z"/><rect x="66.3" y="0.8" width="1.2" height="6.4"/>
</g></svg>
<div class="r" style="left:508.40px;top:3.10px;width:25.00px;height:11.30px;background:#545454;border-radius:3px;"></div>
<svg class="r" style="left:509.40px;top:4.80px;" width="24" height="8" viewBox="0 0 24 8"><g fill="#f0f0f0"><path d="M5.4 1 L1.4 4 L5.4 7Z"/><rect x="6.4" y="1" width="1.3" height="6"/><rect x="15.3" y="1" width="1.3" height="6"/><path d="M17.6 1 L21.6 4 L17.6 7Z"/></g></svg>
<svg class="r" style="left:534.40px;top:5.00px;" width="8" height="8" viewBox="0 0 8 8"><path d="M1.7999999999999998 2.9 L4 5.1 L6.2 2.9" stroke="#d0d0d0" stroke-width="1.1" fill="none" stroke-linecap="round" stroke-linejoin="round"/></svg>
<div class="r" style="left:548.40px;top:3.10px;width:12.50px;height:11.30px;background:#545454;border-radius:3px;"></div>
<svg class="r" style="left:550.10px;top:4.30px;" width="9" height="9" viewBox="0 0 9 9"><path d="M1.4 8 V4.4 A3.1 3.1 0 0 1 7.6 4.4 V8 H5.8 V4.4 A1.3 1.3 0 0 0 3.2 4.4 V8Z" fill="none" stroke="#c8c8c8" stroke-width="0.8"/><path d="M0.6 8.4 H8.4" stroke="#c8c8c8" stroke-width="0.8"/></svg>
<svg class="r" style="left:562.40px;top:5.00px;" width="8" height="8" viewBox="0 0 8 8"><path d="M1.7999999999999998 2.9 L4 5.1 L6.2 2.9" stroke="#d0d0d0" stroke-width="1.1" fill="none" stroke-linecap="round" stroke-linejoin="round"/></svg>
<div class="r" style="left:778.10px;top:3.10px;width:45.90px;height:11.30px;background:#545454;border-radius:3px;"></div>
<div class="t" style="left:794.79px;top:2.78px;font-size:7.45px;color:#e3e3e3;">205</div>
<div class="r" style="left:828.40px;top:3.10px;width:12.60px;height:11.30px;background:#464646;border-radius:3px;border-top-right-radius:0;border-bottom-right-radius:0"></div>
<svg class="r" style="left:829.20px;top:3.40px;" width="11" height="11" viewBox="0 0 11 11"><circle cx="5.5" cy="6" r="3.8" fill="none" stroke="#dcdcdc" stroke-width="0.9"/><path d="M5.5 6 V3.8 M5.5 6 L7 7 M4.4 1 H6.6 M8.4 2.4 L9.2 3.2" stroke="#dcdcdc" stroke-width="0.9" fill="none"/></svg>
<div class="r" style="left:841.90px;top:3.10px;width:54.10px;height:11.30px;background:#545454;border-radius:3px;border-top-right-radius:0;border-bottom-right-radius:0"></div>
<div class="t" style="left:849.40px;top:2.78px;font-size:7.45px;color:#e3e3e3;">Start</div>
<div class="t" style="left:882.76px;top:2.78px;font-size:7.45px;color:#e3e3e3;">1</div>
<div class="r" style="left:896.80px;top:3.10px;width:54.60px;height:11.30px;background:#545454;border-radius:3px;border-top-left-radius:0;border-bottom-left-radius:0"></div>
<div class="t" style="left:904.90px;top:2.78px;font-size:7.45px;color:#e3e3e3;">End</div>
<div class="t" style="left:927.47px;top:2.78px;font-size:7.45px;color:#e3e3e3;">250</div>
<div class="r" style="left:959.40px;top:3.10px;width:12.00px;height:11.30px;background:#4772b3;border-radius:3px;"></div>
<svg class="r" style="left:960.90px;top:4.30px;" width="9" height="9" viewBox="0 0 9 9"><circle cx="4.2" cy="4.8" r="3.4" fill="#fff"/><circle cx="4.2" cy="4.8" r="1.6" fill="#4772b3"/><path d="M5.4 0.8 A3.4 3.4 0 0 1 8.4 3.8" fill="none" stroke="#fff" stroke-width="0.9"/></svg>
<svg class="r" style="left:973.40px;top:5.00px;" width="8" height="8" viewBox="0 0 8 8"><path d="M1.7999999999999998 2.9 L4 5.1 L6.2 2.9" stroke="#d0d0d0" stroke-width="1.1" fill="none" stroke-linecap="round" stroke-linejoin="round"/></svg>
<div class="t" style="left:30.87px;top:18.28px;font-size:7.30px;color:#a8a8a8;">0</div>
<div class="t" style="left:72.92px;top:18.28px;font-size:7.30px;color:#a8a8a8;">12</div>
<div class="t" style="left:117.00px;top:18.28px;font-size:7.30px;color:#a8a8a8;">24</div>
<div class="t" style="left:161.08px;top:18.28px;font-size:7.30px;color:#a8a8a8;">36</div>
<div class="t" style="left:205.16px;top:18.28px;font-size:7.30px;color:#a8a8a8;">48</div>
<div class="t" style="left:249.24px;top:18.28px;font-size:7.30px;color:#a8a8a8;">60</div>
<div class="t" style="left:293.32px;top:18.28px;font-size:7.30px;color:#a8a8a8;">72</div>
<div class="t" style="left:337.40px;top:18.28px;font-size:7.30px;color:#a8a8a8;">84</div>
<div class="t" style="left:381.48px;top:18.28px;font-size:7.30px;color:#a8a8a8;">96</div>
<div class="t" style="left:423.53px;top:18.28px;font-size:7.30px;color:#a8a8a8;">108</div>
<div class="t" style="left:467.61px;top:18.28px;font-size:7.30px;color:#a8a8a8;">120</div>
<div class="t" style="left:511.69px;top:18.28px;font-size:7.30px;color:#a8a8a8;">132</div>
<div class="t" style="left:555.77px;top:18.28px;font-size:7.30px;color:#a8a8a8;">144</div>
<div class="t" style="left:599.85px;top:18.28px;font-size:7.30px;color:#a8a8a8;">156</div>
<div class="t" style="left:643.93px;top:18.28px;font-size:7.30px;color:#a8a8a8;">168</div>
<div class="t" style="left:688.01px;top:18.28px;font-size:7.30px;color:#a8a8a8;">180</div>
<div class="t" style="left:732.09px;top:18.28px;font-size:7.30px;color:#a8a8a8;">192</div>
<div class="t" style="left:776.17px;top:18.28px;font-size:7.30px;color:#a8a8a8;">204</div>
<div class="t" style="left:820.25px;top:18.28px;font-size:7.30px;color:#a8a8a8;">216</div>
<div class="t" style="left:864.33px;top:18.28px;font-size:7.30px;color:#a8a8a8;">228</div>
<div class="t" style="left:908.41px;top:18.28px;font-size:7.30px;color:#a8a8a8;">240</div>
<div class="t" style="left:952.49px;top:18.28px;font-size:7.30px;color:#a8a8a8;">252</div>
<div class="r" style="left:-0.60px;top:30.60px;width:990.00px;height:22.40px;background:#252525;border-radius:0px;"></div>
<div class="r" style="left:36.57px;top:30.60px;width:914.66px;height:22.20px;background:#2e2e2e;border-radius:0px;"></div>
<div class="r" style="left:7.40px;top:50.40px;width:943.83px;height:1.60px;background:#3f3f3f;border-radius:0px;"></div>
<svg class="r" style="left:0.00px;top:30.60px;" width="988" height="22.2" viewBox="0 0 988 22.2"><rect x="54.54" y="0" width="0.8" height="22.2" fill="#282828"/><rect x="76.58" y="0" width="0.8" height="22.2" fill="#1c1c1c"/><rect x="98.62" y="0" width="0.8" height="22.2" fill="#282828"/><rect x="120.66" y="0" width="0.8" height="22.2" fill="#1c1c1c"/><rect x="142.70" y="0" width="0.8" height="22.2" fill="#282828"/><rect x="164.74" y="0" width="0.8" height="22.2" fill="#1c1c1c"/><rect x="186.78" y="0" width="0.8" height="22.2" fill="#282828"/><rect x="208.82" y="0" width="0.8" height="22.2" fill="#1c1c1c"/><rect x="230.86" y="0" width="0.8" height="22.2" fill="#282828"/><rect x="252.90" y="0" width="0.8" height="22.2" fill="#1c1c1c"/><rect x="274.94" y="0" width="0.8" height="22.2" fill="#282828"/><rect x="296.98" y="0" width="0.8" height="22.2" fill="#1c1c1c"/><rect x="319.02" y="0" width="0.8" height="22.2" fill="#282828"/><rect x="341.06" y="0" width="0.8" height="22.2" fill="#1c1c1c"/><rect x="363.10" y="0" width="0.8" height="22.2" fill="#282828"/><rect x="385.14" y="0" width="0.8" height="22.2" fill="#1c1c1c"/><rect x="407.18" y="0" width="0.8" height="22.2" fill="#282828"/><rect x="429.22" y="0" width="0.8" height="22.2" fill="#1c1c1c"/><rect x="451.26" y="0" width="0.8" height="22.2" fill="#282828"/><rect x="473.30" y="0" width="0.8" height="22.2" fill="#1c1c1c"/><rect x="495.34" y="0" width="0.8" height="22.2" fill="#282828"/><rect x="517.38" y="0" width="0.8" height="22.2" fill="#1c1c1c"/><rect x="539.42" y="0" width="0.8" height="22.2" fill="#282828"/><rect x="561.46" y="0" width="0.8" height="22.2" fill="#1c1c1c"/><rect x="583.50" y="0" width="0.8" height="22.2" fill="#282828"/><rect x="605.54" y="0" width="0.8" height="22.2" fill="#1c1c1c"/><rect x="627.58" y="0" width="0.8" height="22.2" fill="#282828"/><rect x="649.62" y="0" width="0.8" height="22.2" fill="#1c1c1c"/><rect x="671.66" y="0" width="0.8" height="22.2" fill="#282828"/><rect x="693.70" y="0" width="0.8" height="22.2" fill="#1c1c1c"/><rect x="715.74" y="0" width="0.8" height="22.2" fill="#282828"/><rect x="737.78" y="0" width="0.8" height="22.2" fill="#1c1c1c"/><rect x="759.82" y="0" width="0.8" height="22.2" fill="#282828"/><rect x="781.86" y="0" width="0.8" height="22.2" fill="#1c1c1c"/><rect x="803.90" y="0" width="0.8" height="22.2" fill="#282828"/><rect x="825.94" y="0" width="0.8" height="22.2" fill="#1c1c1c"/><rect x="847.98" y="0" width="0.8" height="22.2" fill="#282828"/><rect x="870.02" y="0" width="0.8" height="22.2" fill="#1c1c1c"/><rect x="892.06" y="0" width="0.8" height="22.2" fill="#282828"/><rect x="914.10" y="0" width="0.8" height="22.2" fill="#1c1c1c"/><rect x="936.14" y="0" width="0.8" height="22.2" fill="#282828"/></svg>
<div class="r" style="left:985.20px;top:32.00px;width:1.60px;height:16.00px;background:#333333;border-radius:1px;"></div>
<svg class="r" style="left:-0.10px;top:32.00px;" width="5" height="7" viewBox="0 0 5 7"><path d="M1 0.8 L3.4 3.3 L1 5.8" fill="none" stroke="#9a9a9a" stroke-width="0.8"/></svg>
<div class="r" style="left:785.33px;top:29.00px;width:1.20px;height:24.00px;background:#4772b3;border-radius:0px;"></div>
<svg class="r" style="left:782.93px;top:28.50px;" width="6" height="5" viewBox="0 0 6 5"><path d="M0 0 H6 L3 4.5Z" fill="#4772b3"/></svg>
<div class="r" style="left:776.73px;top:18.00px;width:18.40px;height:11.00px;background:#4772b3;border-radius:2.5px;"></div>
<div class="t" style="left:779.84px;top:18.28px;font-size:7.30px;color:#ffffff;">205</div>
</div>
<svg class="r" style="left:3.80px;top:724.60px;" width="7" height="10" viewBox="0 0 7 10"><rect x="0.6" y="0.6" width="5.8" height="8.8" rx="2.4" fill="none" stroke="#c4c4c4" stroke-width="0.8"/><path d="M0.6 4 V3 A2.4 2.4 0 0 1 3.3 0.6 V4Z" fill="#c4c4c4"/></svg>
<div class="t" style="left:12.50px;top:723.88px;font-size:7.20px;color:#c4c4c4;">Select</div>
<svg class="r" style="left:39.40px;top:724.60px;" width="7" height="10" viewBox="0 0 7 10"><rect x="0.6" y="0.6" width="5.8" height="8.8" rx="2.4" fill="none" stroke="#c4c4c4" stroke-width="0.8"/><rect x="2.6" y="1.2" width="1.8" height="3.2" rx="0.9" fill="#c4c4c4"/></svg>
<div class="t" style="left:48.00px;top:723.89px;font-size:7.17px;color:#c4c4c4;">Rotate View</div>
<svg class="r" style="left:93.00px;top:724.60px;" width="7" height="10" viewBox="0 0 7 10"><rect x="0.6" y="0.6" width="5.8" height="8.8" rx="2.4" fill="none" stroke="#c4c4c4" stroke-width="0.8"/><path d="M6.4 4 V3 A2.4 2.4 0 0 0 3.7 0.6 V4Z" fill="#c4c4c4"/></svg>
<div class="t" style="left:102.00px;top:723.89px;font-size:7.11px;color:#c4c4c4;">Options</div>
<div class="t" style="left:727.50px;top:723.87px;font-size:7.50px;color:#c4c4c4;">pilot | long sleeve button up shirt | Verts:14,804 | Faces:14,704 | Tris:29,184 | Objects:0/13 | Memory: 121.3 MiB | VRAM: 4.4/12.0 GiB | 5.0.1</div>
</div></body></html>
